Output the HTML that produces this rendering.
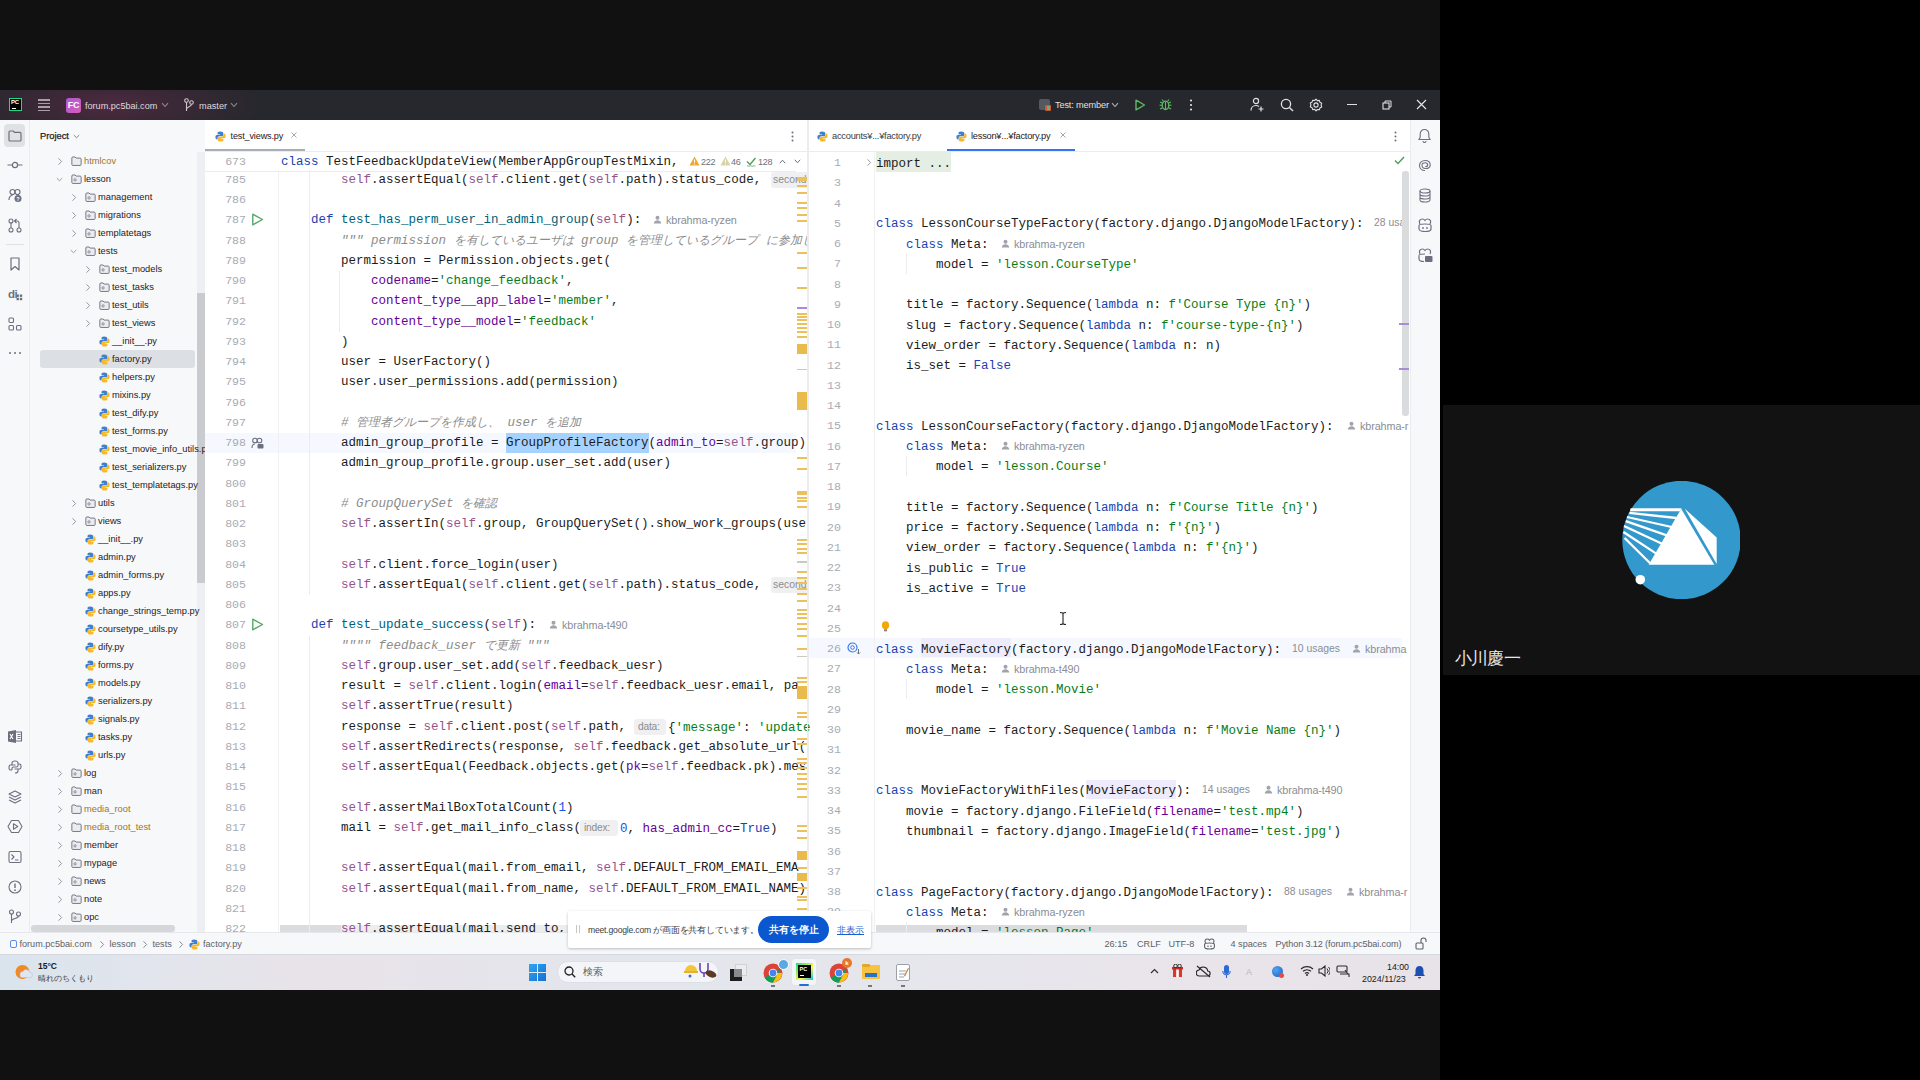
<!DOCTYPE html>
<html><head><meta charset="utf-8">
<style>
*{box-sizing:border-box;margin:0;padding:0}
html,body{width:1920px;height:1080px;overflow:hidden;background:#000}
body{position:relative;font-family:"Liberation Sans",sans-serif}
.a{position:absolute}
#share{left:0;top:0;width:1440px;height:1080px;background:#111}
#title{left:0;top:90px;width:1440px;height:30px;background:radial-gradient(ellipse 150px 40px at 110px 15px,#4d2a40 0%,#3a2836 45%,#27282d 100%);background-color:#27282d}
.tb{color:#dfe1e5;font-size:11px;white-space:nowrap}
#stripeL{left:0;top:120px;width:30px;height:812px;background:#f7f8fa;border-right:1px solid #ebecf0}
#proj{left:30px;top:120px;width:175px;height:812px;background:#f7f8fa}
#edL{left:205px;top:120px;width:603px;height:812px;background:#fff}
#edR{left:808px;top:120px;width:602px;height:812px;background:#fff;border-left:1px solid #ebecf0}
#stripeR{left:1410px;top:120px;width:30px;height:812px;background:#f7f8fa;border-left:1px solid #ebecf0}
#status{left:0;top:932px;width:1440px;height:22px;background:#f7f8fa;border-top:1px solid #e6e7ea}
#taskbar{left:0;top:954px;width:1440px;height:36px;background:linear-gradient(90deg,#dae4ed 0%,#e3e5ec 12%,#e8e3e9 22%,#e3e6ed 45%,#e6e6ec 65%,#e9e4ea 85%,#e7e3e9 100%);border-top:1px solid #d5d8de}
#tile{left:1443px;top:405px;width:477px;height:270px;background:#121212}
.tabbar{height:32px;border-bottom:1px solid #ebecf0;background:#fff}
.mono{font-family:"Liberation Mono",monospace;font-size:12.5px;white-space:pre;color:#1c1c1c}
.ln{color:#9fa3ab;text-align:right}
.ui{font-size:10.5px;color:#1f2024;white-space:nowrap}
.k{color:#1a43b0}.f{color:#00627a}.s{color:#067d17}.sf{color:#94558d}.p{color:#660099}.c{color:#8c8c8c;font-style:italic}.n{color:#1750eb}
.hint{font-family:"Liberation Sans",sans-serif;font-size:10.5px;color:#8c8c8c}
.inl{font-family:"Liberation Sans",sans-serif;font-size:10px;color:#8a8a8a;background:#ededf0;border-radius:3px;padding:1px 3px}
</style></head><body>

<div class="a" id="share"></div>
<div class="a" id="tile"></div>
<div class="a" id="title"></div>
<div class="a" id="stripeL"></div>
<div class="a" id="proj"></div>
<div class="a" id="edL"></div>
<div class="a" id="edR"></div>
<div class="a" id="stripeR"></div>
<div class="a" id="status"></div>
<div class="a" id="taskbar"></div>
<div class="a" style="left:205px;top:152px;width:602px;height:780px;overflow:hidden">
<div class="a" style="left:136px;top:773px;width:230px;height:8px;background:#ededee"></div>
<div class="a" style="left:75px;top:773px;width:61px;height:8px;background:#dcdcde"></div>
<div class="a" style="left:0;top:281.00px;width:591px;height:20.25px;background:#f5f8fe"></div>
<div class="a" style="left:301.00px;top:281.00px;width:142.50px;height:20.25px;background:#a6d2ff"></div>
<div class="a mono ln" style="left:0;top:17.75px;width:41px;line-height:20.25px;color:#a8abb3;font-size:11.6px">785</div>
<div class="a mono " style="left:76.00px;top:17.75px;height:20px;line-height:20px">        <span class="sf">self</span>.assertEqual(<span class="sf">self</span>.client.get(<span class="sf">self</span>.path).status_code, </div>
<div class="a mono ln" style="left:0;top:38.00px;width:41px;line-height:20.25px;color:#a8abb3;font-size:11.6px">786</div>
<div class="a mono " style="left:76.00px;top:38.00px;height:20px;line-height:20px"></div>
<div class="a mono ln" style="left:0;top:58.25px;width:41px;line-height:20.25px;color:#a8abb3;font-size:11.6px">787</div>
<div class="a mono " style="left:76.00px;top:58.25px;height:20px;line-height:20px">    <span class="k">def</span> <span class="f">test_has_perm_user_in_admin_group</span>(<span class="sf">self</span>):</div>
<div class="a mono ln" style="left:0;top:78.50px;width:41px;line-height:20.25px;color:#a8abb3;font-size:11.6px">788</div>
<div class="a mono " style="left:76.00px;top:78.50px;height:20px;line-height:20px">        <span class="c">&quot;&quot;&quot; permission <span style="font-size:11.9px">を有しているユーザは</span> group <span style="font-size:11.9px">を管理しているグループ</span> <span style="font-size:11.9px">に参加し</span></span></div>
<div class="a mono ln" style="left:0;top:98.75px;width:41px;line-height:20.25px;color:#a8abb3;font-size:11.6px">789</div>
<div class="a mono " style="left:76.00px;top:98.75px;height:20px;line-height:20px">        permission = Permission.objects.get(</div>
<div class="a mono ln" style="left:0;top:119.00px;width:41px;line-height:20.25px;color:#a8abb3;font-size:11.6px">790</div>
<div class="a mono " style="left:76.00px;top:119.00px;height:20px;line-height:20px">            <span class="p">codename</span>=<span class="s">&#x27;change_feedback&#x27;</span>,</div>
<div class="a mono ln" style="left:0;top:139.25px;width:41px;line-height:20.25px;color:#a8abb3;font-size:11.6px">791</div>
<div class="a mono " style="left:76.00px;top:139.25px;height:20px;line-height:20px">            <span class="p">content_type__app_label</span>=<span class="s">&#x27;member&#x27;</span>,</div>
<div class="a mono ln" style="left:0;top:159.50px;width:41px;line-height:20.25px;color:#a8abb3;font-size:11.6px">792</div>
<div class="a mono " style="left:76.00px;top:159.50px;height:20px;line-height:20px">            <span class="p">content_type__model</span>=<span class="s">&#x27;feedback&#x27;</span></div>
<div class="a mono ln" style="left:0;top:179.75px;width:41px;line-height:20.25px;color:#a8abb3;font-size:11.6px">793</div>
<div class="a mono " style="left:76.00px;top:179.75px;height:20px;line-height:20px">        )</div>
<div class="a mono ln" style="left:0;top:200.00px;width:41px;line-height:20.25px;color:#a8abb3;font-size:11.6px">794</div>
<div class="a mono " style="left:76.00px;top:200.00px;height:20px;line-height:20px">        user = UserFactory()</div>
<div class="a mono ln" style="left:0;top:220.25px;width:41px;line-height:20.25px;color:#a8abb3;font-size:11.6px">795</div>
<div class="a mono " style="left:76.00px;top:220.25px;height:20px;line-height:20px">        user.user_permissions.add(permission)</div>
<div class="a mono ln" style="left:0;top:240.50px;width:41px;line-height:20.25px;color:#a8abb3;font-size:11.6px">796</div>
<div class="a mono " style="left:76.00px;top:240.50px;height:20px;line-height:20px"></div>
<div class="a mono ln" style="left:0;top:260.75px;width:41px;line-height:20.25px;color:#a8abb3;font-size:11.6px">797</div>
<div class="a mono " style="left:76.00px;top:260.75px;height:20px;line-height:20px">        <span class="c"># <span style="font-size:11.9px">管理者グループを作成し、</span> user <span style="font-size:11.9px">を追加</span></span></div>
<div class="a mono ln" style="left:0;top:281.00px;width:41px;line-height:20.25px;color:#a8abb3;font-size:11.6px">798</div>
<div class="a mono " style="left:76.00px;top:281.00px;height:20px;line-height:20px">        admin_group_profile = GroupProfileFactory(<span class="p">admin_to</span>=<span class="sf">self</span>.group)</div>
<div class="a mono ln" style="left:0;top:301.25px;width:41px;line-height:20.25px;color:#a8abb3;font-size:11.6px">799</div>
<div class="a mono " style="left:76.00px;top:301.25px;height:20px;line-height:20px">        admin_group_profile.group.user_set.add(user)</div>
<div class="a mono ln" style="left:0;top:321.50px;width:41px;line-height:20.25px;color:#a8abb3;font-size:11.6px">800</div>
<div class="a mono " style="left:76.00px;top:321.50px;height:20px;line-height:20px"></div>
<div class="a mono ln" style="left:0;top:341.75px;width:41px;line-height:20.25px;color:#a8abb3;font-size:11.6px">801</div>
<div class="a mono " style="left:76.00px;top:341.75px;height:20px;line-height:20px">        <span class="c"># GroupQuerySet <span style="font-size:11.9px">を確認</span></span></div>
<div class="a mono ln" style="left:0;top:362.00px;width:41px;line-height:20.25px;color:#a8abb3;font-size:11.6px">802</div>
<div class="a mono " style="left:76.00px;top:362.00px;height:20px;line-height:20px">        <span class="sf">self</span>.assertIn(<span class="sf">self</span>.group, GroupQuerySet().show_work_groups(user</div>
<div class="a mono ln" style="left:0;top:382.25px;width:41px;line-height:20.25px;color:#a8abb3;font-size:11.6px">803</div>
<div class="a mono " style="left:76.00px;top:382.25px;height:20px;line-height:20px"></div>
<div class="a mono ln" style="left:0;top:402.50px;width:41px;line-height:20.25px;color:#a8abb3;font-size:11.6px">804</div>
<div class="a mono " style="left:76.00px;top:402.50px;height:20px;line-height:20px">        <span class="sf">self</span>.client.force_login(user)</div>
<div class="a mono ln" style="left:0;top:422.75px;width:41px;line-height:20.25px;color:#a8abb3;font-size:11.6px">805</div>
<div class="a mono " style="left:76.00px;top:422.75px;height:20px;line-height:20px">        <span class="sf">self</span>.assertEqual(<span class="sf">self</span>.client.get(<span class="sf">self</span>.path).status_code, </div>
<div class="a mono ln" style="left:0;top:443.00px;width:41px;line-height:20.25px;color:#a8abb3;font-size:11.6px">806</div>
<div class="a mono " style="left:76.00px;top:443.00px;height:20px;line-height:20px"></div>
<div class="a mono ln" style="left:0;top:463.25px;width:41px;line-height:20.25px;color:#a8abb3;font-size:11.6px">807</div>
<div class="a mono " style="left:76.00px;top:463.25px;height:20px;line-height:20px">    <span class="k">def</span> <span class="f">test_update_success</span>(<span class="sf">self</span>):</div>
<div class="a mono ln" style="left:0;top:483.50px;width:41px;line-height:20.25px;color:#a8abb3;font-size:11.6px">808</div>
<div class="a mono " style="left:76.00px;top:483.50px;height:20px;line-height:20px">        <span class="c">&quot;&quot;&quot;&quot; feedback_user <span style="font-size:11.9px">で更新</span> &quot;&quot;&quot;</span></div>
<div class="a mono ln" style="left:0;top:503.75px;width:41px;line-height:20.25px;color:#a8abb3;font-size:11.6px">809</div>
<div class="a mono " style="left:76.00px;top:503.75px;height:20px;line-height:20px">        <span class="sf">self</span>.group.user_set.add(<span class="sf">self</span>.feedback_uesr)</div>
<div class="a mono ln" style="left:0;top:524.00px;width:41px;line-height:20.25px;color:#a8abb3;font-size:11.6px">810</div>
<div class="a mono " style="left:76.00px;top:524.00px;height:20px;line-height:20px">        result = <span class="sf">self</span>.client.login(<span class="p">email</span>=<span class="sf">self</span>.feedback_uesr.email, pa</div>
<div class="a mono ln" style="left:0;top:544.25px;width:41px;line-height:20.25px;color:#a8abb3;font-size:11.6px">811</div>
<div class="a mono " style="left:76.00px;top:544.25px;height:20px;line-height:20px">        <span class="sf">self</span>.assertTrue(result)</div>
<div class="a mono ln" style="left:0;top:564.50px;width:41px;line-height:20.25px;color:#a8abb3;font-size:11.6px">812</div>
<div class="a mono " style="left:76.00px;top:564.50px;height:20px;line-height:20px">        response = <span class="sf">self</span>.client.post(<span class="sf">self</span>.path, </div>
<div class="a mono ln" style="left:0;top:584.75px;width:41px;line-height:20.25px;color:#a8abb3;font-size:11.6px">813</div>
<div class="a mono " style="left:76.00px;top:584.75px;height:20px;line-height:20px">        <span class="sf">self</span>.assertRedirects(response, <span class="sf">self</span>.feedback.get_absolute_url(</div>
<div class="a mono ln" style="left:0;top:605.00px;width:41px;line-height:20.25px;color:#a8abb3;font-size:11.6px">814</div>
<div class="a mono " style="left:76.00px;top:605.00px;height:20px;line-height:20px">        <span class="sf">self</span>.assertEqual(Feedback.objects.get(<span class="p">pk</span>=<span class="sf">self</span>.feedback.pk).mes</div>
<div class="a mono ln" style="left:0;top:625.25px;width:41px;line-height:20.25px;color:#a8abb3;font-size:11.6px">815</div>
<div class="a mono " style="left:76.00px;top:625.25px;height:20px;line-height:20px"></div>
<div class="a mono ln" style="left:0;top:645.50px;width:41px;line-height:20.25px;color:#a8abb3;font-size:11.6px">816</div>
<div class="a mono " style="left:76.00px;top:645.50px;height:20px;line-height:20px">        <span class="sf">self</span>.assertMailBoxTotalCount(<span class="n">1</span>)</div>
<div class="a mono ln" style="left:0;top:665.75px;width:41px;line-height:20.25px;color:#a8abb3;font-size:11.6px">817</div>
<div class="a mono " style="left:76.00px;top:665.75px;height:20px;line-height:20px">        mail = <span class="sf">self</span>.get_mail_info_class(</div>
<div class="a mono ln" style="left:0;top:686.00px;width:41px;line-height:20.25px;color:#a8abb3;font-size:11.6px">818</div>
<div class="a mono " style="left:76.00px;top:686.00px;height:20px;line-height:20px"></div>
<div class="a mono ln" style="left:0;top:706.25px;width:41px;line-height:20.25px;color:#a8abb3;font-size:11.6px">819</div>
<div class="a mono " style="left:76.00px;top:706.25px;height:20px;line-height:20px">        <span class="sf">self</span>.assertEqual(mail.from_email, <span class="sf">self</span>.DEFAULT_FROM_EMAIL_EMA</div>
<div class="a mono ln" style="left:0;top:726.50px;width:41px;line-height:20.25px;color:#a8abb3;font-size:11.6px">820</div>
<div class="a mono " style="left:76.00px;top:726.50px;height:20px;line-height:20px">        <span class="sf">self</span>.assertEqual(mail.from_name, <span class="sf">self</span>.DEFAULT_FROM_EMAIL_NAME)</div>
<div class="a mono ln" style="left:0;top:746.75px;width:41px;line-height:20.25px;color:#a8abb3;font-size:11.6px">821</div>
<div class="a mono " style="left:76.00px;top:746.75px;height:20px;line-height:20px"></div>
<div class="a mono ln" style="left:0;top:767.00px;width:41px;line-height:20.25px;color:#a8abb3;font-size:11.6px">822</div>
<div class="a mono " style="left:76.00px;top:767.00px;height:20px;line-height:20px">        <span class="sf">self</span>.assertEqual(mail.send_to, </div>
</div>
<div class="a" style="left:205px;top:152px;width:591px;height:20px;background:#fff;border-bottom:1px solid #ebecf0"></div>
<div class="a mono ln" style="left:205px;top:152px;width:41px;line-height:20px;color:#a8abb3;font-size:11.6px">673</div>
<div class="a mono " style="left:281.00px;top:152.00px;height:20px;line-height:20px"><span class="k">class</span> TestFeedbackUpdateView(MemberAppGroupTestMixin,</div>
<div class="a" style="left:809px;top:152px;width:593px;height:780px;overflow:hidden">
<div class="a" style="left:0;top:486.00px;width:593px;height:20.25px;background:#f5f8fe"></div>
<div class="a" style="left:67px;top:773px;width:371px;height:7px;background:#dcdcde"></div>
<div class="a" style="left:96.5px;top:101.25px;width:1px;height:20.25px;background:#ececef"></div>
<div class="a" style="left:96.5px;top:303.75px;width:1px;height:20.25px;background:#ececef"></div>
<div class="a" style="left:96.5px;top:526.50px;width:1px;height:20.25px;background:#ececef"></div>
<div class="a" style="left:96.5px;top:769.50px;width:1px;height:20.25px;background:#ececef"></div>
<div class="a" style="left:67.00px;top:0;width:75.00px;height:20px;background:#e4eee2"></div>
<div class="a" style="left:112.00px;top:486.00px;width:90.00px;height:19px;background:#edebfc"></div>
<div class="a" style="left:277.00px;top:627.75px;width:90.00px;height:19px;background:#edebfc"></div>
<div class="a mono ln" style="left:0;top:1.00px;width:32px;line-height:20.25px;color:#a8abb3;font-size:11.6px">1</div>
<div class="a mono " style="left:67.00px;top:1.50px;height:20px;line-height:20px">import ...</div>
<div class="a mono ln" style="left:0;top:21.25px;width:32px;line-height:20.25px;color:#a8abb3;font-size:11.6px">3</div>
<div class="a mono " style="left:67.00px;top:21.75px;height:20px;line-height:20px"></div>
<div class="a mono ln" style="left:0;top:41.50px;width:32px;line-height:20.25px;color:#a8abb3;font-size:11.6px">4</div>
<div class="a mono " style="left:67.00px;top:42.00px;height:20px;line-height:20px"></div>
<div class="a mono ln" style="left:0;top:61.75px;width:32px;line-height:20.25px;color:#a8abb3;font-size:11.6px">5</div>
<div class="a mono " style="left:67.00px;top:62.25px;height:20px;line-height:20px"><span class="k">class</span> LessonCourseTypeFactory(factory.django.DjangoModelFactory):</div>
<div class="a mono ln" style="left:0;top:82.00px;width:32px;line-height:20.25px;color:#a8abb3;font-size:11.6px">6</div>
<div class="a mono " style="left:67.00px;top:82.50px;height:20px;line-height:20px">    <span class="k">class</span> Meta:</div>
<div class="a mono ln" style="left:0;top:102.25px;width:32px;line-height:20.25px;color:#a8abb3;font-size:11.6px">7</div>
<div class="a mono " style="left:67.00px;top:102.75px;height:20px;line-height:20px">        model = <span class="s">&#x27;lesson.CourseType&#x27;</span></div>
<div class="a mono ln" style="left:0;top:122.50px;width:32px;line-height:20.25px;color:#a8abb3;font-size:11.6px">8</div>
<div class="a mono " style="left:67.00px;top:123.00px;height:20px;line-height:20px"></div>
<div class="a mono ln" style="left:0;top:142.75px;width:32px;line-height:20.25px;color:#a8abb3;font-size:11.6px">9</div>
<div class="a mono " style="left:67.00px;top:143.25px;height:20px;line-height:20px">    title = factory.Sequence(<span class="k">lambda</span> n: <span class="s">f&#x27;Course Type {n}&#x27;</span>)</div>
<div class="a mono ln" style="left:0;top:163.00px;width:32px;line-height:20.25px;color:#a8abb3;font-size:11.6px">10</div>
<div class="a mono " style="left:67.00px;top:163.50px;height:20px;line-height:20px">    slug = factory.Sequence(<span class="k">lambda</span> n: <span class="s">f&#x27;course-type-{n}&#x27;</span>)</div>
<div class="a mono ln" style="left:0;top:183.25px;width:32px;line-height:20.25px;color:#a8abb3;font-size:11.6px">11</div>
<div class="a mono " style="left:67.00px;top:183.75px;height:20px;line-height:20px">    view_order = factory.Sequence(<span class="k">lambda</span> n: n)</div>
<div class="a mono ln" style="left:0;top:203.50px;width:32px;line-height:20.25px;color:#a8abb3;font-size:11.6px">12</div>
<div class="a mono " style="left:67.00px;top:204.00px;height:20px;line-height:20px">    is_set = <span class="k">False</span></div>
<div class="a mono ln" style="left:0;top:223.75px;width:32px;line-height:20.25px;color:#a8abb3;font-size:11.6px">13</div>
<div class="a mono " style="left:67.00px;top:224.25px;height:20px;line-height:20px"></div>
<div class="a mono ln" style="left:0;top:244.00px;width:32px;line-height:20.25px;color:#a8abb3;font-size:11.6px">14</div>
<div class="a mono " style="left:67.00px;top:244.50px;height:20px;line-height:20px"></div>
<div class="a mono ln" style="left:0;top:264.25px;width:32px;line-height:20.25px;color:#a8abb3;font-size:11.6px">15</div>
<div class="a mono " style="left:67.00px;top:264.75px;height:20px;line-height:20px"><span class="k">class</span> LessonCourseFactory(factory.django.DjangoModelFactory):</div>
<div class="a mono ln" style="left:0;top:284.50px;width:32px;line-height:20.25px;color:#a8abb3;font-size:11.6px">16</div>
<div class="a mono " style="left:67.00px;top:285.00px;height:20px;line-height:20px">    <span class="k">class</span> Meta:</div>
<div class="a mono ln" style="left:0;top:304.75px;width:32px;line-height:20.25px;color:#a8abb3;font-size:11.6px">17</div>
<div class="a mono " style="left:67.00px;top:305.25px;height:20px;line-height:20px">        model = <span class="s">&#x27;lesson.Course&#x27;</span></div>
<div class="a mono ln" style="left:0;top:325.00px;width:32px;line-height:20.25px;color:#a8abb3;font-size:11.6px">18</div>
<div class="a mono " style="left:67.00px;top:325.50px;height:20px;line-height:20px"></div>
<div class="a mono ln" style="left:0;top:345.25px;width:32px;line-height:20.25px;color:#a8abb3;font-size:11.6px">19</div>
<div class="a mono " style="left:67.00px;top:345.75px;height:20px;line-height:20px">    title = factory.Sequence(<span class="k">lambda</span> n: <span class="s">f&#x27;Course Title {n}&#x27;</span>)</div>
<div class="a mono ln" style="left:0;top:365.50px;width:32px;line-height:20.25px;color:#a8abb3;font-size:11.6px">20</div>
<div class="a mono " style="left:67.00px;top:366.00px;height:20px;line-height:20px">    price = factory.Sequence(<span class="k">lambda</span> n: <span class="s">f&#x27;{n}&#x27;</span>)</div>
<div class="a mono ln" style="left:0;top:385.75px;width:32px;line-height:20.25px;color:#a8abb3;font-size:11.6px">21</div>
<div class="a mono " style="left:67.00px;top:386.25px;height:20px;line-height:20px">    view_order = factory.Sequence(<span class="k">lambda</span> n: <span class="s">f&#x27;{n}&#x27;</span>)</div>
<div class="a mono ln" style="left:0;top:406.00px;width:32px;line-height:20.25px;color:#a8abb3;font-size:11.6px">22</div>
<div class="a mono " style="left:67.00px;top:406.50px;height:20px;line-height:20px">    is_public = <span class="k">True</span></div>
<div class="a mono ln" style="left:0;top:426.25px;width:32px;line-height:20.25px;color:#a8abb3;font-size:11.6px">23</div>
<div class="a mono " style="left:67.00px;top:426.75px;height:20px;line-height:20px">    is_active = <span class="k">True</span></div>
<div class="a mono ln" style="left:0;top:446.50px;width:32px;line-height:20.25px;color:#a8abb3;font-size:11.6px">24</div>
<div class="a mono " style="left:67.00px;top:447.00px;height:20px;line-height:20px"></div>
<div class="a mono ln" style="left:0;top:466.75px;width:32px;line-height:20.25px;color:#a8abb3;font-size:11.6px">25</div>
<div class="a mono " style="left:67.00px;top:467.25px;height:20px;line-height:20px"></div>
<div class="a mono ln" style="left:0;top:487.00px;width:32px;line-height:20.25px;color:#a8abb3;font-size:11.6px">26</div>
<div class="a mono " style="left:67.00px;top:487.50px;height:20px;line-height:20px"><span class="k">class</span> MovieFactory(factory.django.DjangoModelFactory):</div>
<div class="a mono ln" style="left:0;top:507.25px;width:32px;line-height:20.25px;color:#a8abb3;font-size:11.6px">27</div>
<div class="a mono " style="left:67.00px;top:507.75px;height:20px;line-height:20px">    <span class="k">class</span> Meta:</div>
<div class="a mono ln" style="left:0;top:527.50px;width:32px;line-height:20.25px;color:#a8abb3;font-size:11.6px">28</div>
<div class="a mono " style="left:67.00px;top:528.00px;height:20px;line-height:20px">        model = <span class="s">&#x27;lesson.Movie&#x27;</span></div>
<div class="a mono ln" style="left:0;top:547.75px;width:32px;line-height:20.25px;color:#a8abb3;font-size:11.6px">29</div>
<div class="a mono " style="left:67.00px;top:548.25px;height:20px;line-height:20px"></div>
<div class="a mono ln" style="left:0;top:568.00px;width:32px;line-height:20.25px;color:#a8abb3;font-size:11.6px">30</div>
<div class="a mono " style="left:67.00px;top:568.50px;height:20px;line-height:20px">    movie_name = factory.Sequence(<span class="k">lambda</span> n: <span class="s">f&#x27;Movie Name {n}&#x27;</span>)</div>
<div class="a mono ln" style="left:0;top:588.25px;width:32px;line-height:20.25px;color:#a8abb3;font-size:11.6px">31</div>
<div class="a mono " style="left:67.00px;top:588.75px;height:20px;line-height:20px"></div>
<div class="a mono ln" style="left:0;top:608.50px;width:32px;line-height:20.25px;color:#a8abb3;font-size:11.6px">32</div>
<div class="a mono " style="left:67.00px;top:609.00px;height:20px;line-height:20px"></div>
<div class="a mono ln" style="left:0;top:628.75px;width:32px;line-height:20.25px;color:#a8abb3;font-size:11.6px">33</div>
<div class="a mono " style="left:67.00px;top:629.25px;height:20px;line-height:20px"><span class="k">class</span> MovieFactoryWithFiles(MovieFactory):</div>
<div class="a mono ln" style="left:0;top:649.00px;width:32px;line-height:20.25px;color:#a8abb3;font-size:11.6px">34</div>
<div class="a mono " style="left:67.00px;top:649.50px;height:20px;line-height:20px">    movie = factory.django.FileField(<span class="p">filename</span>=<span class="s">&#x27;test.mp4&#x27;</span>)</div>
<div class="a mono ln" style="left:0;top:669.25px;width:32px;line-height:20.25px;color:#a8abb3;font-size:11.6px">35</div>
<div class="a mono " style="left:67.00px;top:669.75px;height:20px;line-height:20px">    thumbnail = factory.django.ImageField(<span class="p">filename</span>=<span class="s">&#x27;test.jpg&#x27;</span>)</div>
<div class="a mono ln" style="left:0;top:689.50px;width:32px;line-height:20.25px;color:#a8abb3;font-size:11.6px">36</div>
<div class="a mono " style="left:67.00px;top:690.00px;height:20px;line-height:20px"></div>
<div class="a mono ln" style="left:0;top:709.75px;width:32px;line-height:20.25px;color:#a8abb3;font-size:11.6px">37</div>
<div class="a mono " style="left:67.00px;top:710.25px;height:20px;line-height:20px"></div>
<div class="a mono ln" style="left:0;top:730.00px;width:32px;line-height:20.25px;color:#a8abb3;font-size:11.6px">38</div>
<div class="a mono " style="left:67.00px;top:730.50px;height:20px;line-height:20px"><span class="k">class</span> PageFactory(factory.django.DjangoModelFactory):</div>
<div class="a mono ln" style="left:0;top:750.25px;width:32px;line-height:20.25px;color:#a8abb3;font-size:11.6px">39</div>
<div class="a mono " style="left:67.00px;top:750.75px;height:20px;line-height:20px">    <span class="k">class</span> Meta:</div>
<div class="a mono ln" style="left:0;top:770.50px;width:32px;line-height:20.25px;color:#a8abb3;font-size:11.6px">40</div>
<div class="a mono " style="left:67.00px;top:771.00px;height:20px;line-height:20px">        model = <span class="s">&#x27;lesson.Page&#x27;</span></div>
</div>
<div class="a" style="left:9px;top:98px;width:13px;height:13px;background:#000;border:1px solid #21d789"></div>
<div class="a" style="left:11px;top:99px;font:bold 6px/7px 'Liberation Sans',sans-serif;color:#fff;letter-spacing:-0.3px">PC</div>
<div class="a" style="left:11.5px;top:108px;width:4px;height:1px;background:#fff"></div>
<div class="a" style="left:38px;top:99.3px;width:12px;height:1.6px;background:#ab9ca8"></div>
<div class="a" style="left:38px;top:102.8px;width:12px;height:1.6px;background:#ab9ca8"></div>
<div class="a" style="left:38px;top:106.3px;width:12px;height:1.6px;background:#ab9ca8"></div>
<div class="a" style="left:38px;top:109.8px;width:12px;height:1.6px;background:#ab9ca8"></div>
<div class="a" style="left:66px;top:98px;width:15px;height:15px;border-radius:3px;background:linear-gradient(135deg,#b057d4,#d35fb8);color:#fff;font:bold 9px/15px 'Liberation Sans',sans-serif;text-align:center;letter-spacing:-0.2px">FC</div>
<div class="a" style="left:85px;top:95.5px;height:20px;line-height:20px;font-size:9.1px;color:#dfd9de;white-space:nowrap;">forum.pc5bai.com</div>
<svg class="a" style="left:161px;top:102px;" width="8" height="6" viewBox="0 0 8 6"><path d="M1 1.2 L4 4.5 L7 1.2" fill="none" stroke="#8d8790" stroke-width="1.1"/></svg>
<svg class="a" style="left:184px;top:98px;" width="10" height="14" viewBox="0 0 10 14"><circle cx="2.5" cy="2.5" r="1.8" fill="none" stroke="#cfc6cc" stroke-width="1.1"/><circle cx="7.5" cy="4.5" r="1.8" fill="none" stroke="#cfc6cc" stroke-width="1.1"/><path d="M2.5 4.3V13M7.5 6.3c0 2.5-5 2.5-5 5" fill="none" stroke="#cfc6cc" stroke-width="1.1"/></svg>
<div class="a" style="left:199px;top:95.5px;height:20px;line-height:20px;font-size:9.2px;color:#dfd9de;white-space:nowrap;">master</div>
<svg class="a" style="left:230px;top:102px;" width="8" height="6" viewBox="0 0 8 6"><path d="M1 1.2 L4 4.5 L7 1.2" fill="none" stroke="#8d8790" stroke-width="1.1"/></svg>
<div class="a" style="left:1039px;top:99px;width:11px;height:11px;border-radius:2px;background:#55585e"></div>
<div class="a" style="left:1045px;top:105px;width:6px;height:6px;border-radius:1px;background:#c85a3c"></div>
<div class="a" style="left:1047px;top:106px;width:3px;height:4px;background:#5fb865"></div>
<div class="a" style="left:1055px;top:95px;height:20px;line-height:20px;font-size:9.2px;color:#dfe1e5;white-space:nowrap;letter-spacing:-0.15px">Test: member</div>
<svg class="a" style="left:1111px;top:102px;" width="8" height="6" viewBox="0 0 8 6"><path d="M1 1.2 L4 4.5 L7 1.2" fill="none" stroke="#b0b3b8" stroke-width="1.1"/></svg>
<svg class="a" style="left:1134px;top:99px;" width="12" height="12" viewBox="0 0 12 12"><path d="M2 1.2 L10.5 6 L2 10.8z" fill="none" stroke="#5fb865" stroke-width="1.4" stroke-linejoin="round"/></svg>
<svg class="a" style="left:1159px;top:98px;" width="13" height="13" viewBox="0 0 13 13"><ellipse cx="6.5" cy="7.3" rx="3.3" ry="4.2" fill="none" stroke="#5fb865" stroke-width="1.3"/><path d="M4.5 3.5l-1.5-2M8.5 3.5l1.5-2M3 7.3H0.5M10 7.3h2.5M3.3 5L1 4M9.7 5L12 4M3.3 9.8L1 11M9.7 9.8L12 11M6.5 4v7" fill="none" stroke="#5fb865" stroke-width="1.1"/></svg>
<svg class="a" style="left:1189px;top:99px;" width="4" height="12" viewBox="0 0 4 12"><circle cx="2" cy="1.5" r="1.1" fill="#dfe1e5"/><circle cx="2" cy="6" r="1.1" fill="#dfe1e5"/><circle cx="2" cy="10.5" r="1.1" fill="#dfe1e5"/></svg>
<svg class="a" style="left:1250px;top:97px;" width="15" height="15" viewBox="0 0 15 15"><circle cx="6" cy="4" r="2.6" fill="none" stroke="#dfe1e5" stroke-width="1.2"/><path d="M1 13.5c0-3 2.2-5 5-5 1.2 0 2.2.3 3 .9" fill="none" stroke="#dfe1e5" stroke-width="1.2"/><path d="M11 9.5v5M8.5 12h5" stroke="#dfe1e5" stroke-width="1.2"/></svg>
<svg class="a" style="left:1280px;top:98px;" width="14" height="14" viewBox="0 0 14 14"><circle cx="6" cy="6" r="4.6" fill="none" stroke="#dfe1e5" stroke-width="1.3"/><path d="M9.4 9.4L13 13" stroke="#dfe1e5" stroke-width="1.4"/></svg>
<svg class="a" style="left:1309px;top:98px;" width="14" height="14" viewBox="0 0 14 14"><path d="M7 1.2l1.3 1.5 2-.3.6 1.9 1.8.9-.6 1.9.6 1.9-1.8.9-.6 1.9-2-.3L7 12.8l-1.3-1.5-2 .3-.6-1.9-1.8-.9.6-1.9-.6-1.9 1.8-.9.6-1.9 2 .3z" fill="none" stroke="#dfe1e5" stroke-width="1.1" stroke-linejoin="round"/><circle cx="7" cy="7" r="2.1" fill="none" stroke="#dfe1e5" stroke-width="1.1"/></svg>
<div class="a" style="left:1347px;top:104px;width:10px;height:1.2px;background:#dfe1e5"></div>
<svg class="a" style="left:1382px;top:100px;" width="10" height="10" viewBox="0 0 10 10"><rect x="1" y="3" width="6" height="6" fill="none" stroke="#dfe1e5" stroke-width="1.1"/><path d="M3 3V1h6v6H7" fill="none" stroke="#dfe1e5" stroke-width="1"/></svg>
<svg class="a" style="left:1416px;top:99px;" width="11" height="11" viewBox="0 0 11 11"><path d="M1 1L10 10M10 1L1 10" stroke="#e8e9eb" stroke-width="1.1"/></svg>
<div class="a" style="left:4px;top:124px;width:21px;height:23px;border-radius:4px;background:#dfe1e5"></div>
<svg class="a" style="left:8px;top:130px;" width="14" height="12" viewBox="0 0 14 12"><path d="M1 2c0-.6.4-1 1-1h3.2l1.3 1.4H12c.6 0 1 .4 1 1V10c0 .6-.4 1-1 1H2c-.6 0-1-.4-1-1z" fill="none" stroke="#6c707e" stroke-width="1.2"/></svg>
<svg class="a" style="left:7px;top:160px;" width="16" height="10" viewBox="0 0 16 10"><circle cx="8" cy="5" r="2.6" fill="none" stroke="#6c707e" stroke-width="1.2"/><path d="M0.5 5h4.9M10.6 5h4.9" stroke="#6c707e" stroke-width="1.2"/></svg>
<svg class="a" style="left:8px;top:188px;" width="14" height="15" viewBox="0 0 14 15"><circle cx="4.5" cy="4" r="2.5" fill="none" stroke="#6c707e" stroke-width="1.2"/><circle cx="9.5" cy="4" r="2.5" fill="none" stroke="#6c707e" stroke-width="1.2"/><path d="M1 12c0-3 1.5-4.5 3.5-4.5" fill="none" stroke="#6c707e" stroke-width="1.2"/><circle cx="10" cy="10.5" r="3.5" fill="#6c707e"/><text x="10" y="12.6" font-size="5.5" font-family="Liberation Sans" font-weight="bold" fill="#fff" text-anchor="middle">?</text></svg>
<svg class="a" style="left:8px;top:218px;" width="14" height="15" viewBox="0 0 14 15"><circle cx="3" cy="3" r="2" fill="none" stroke="#6c707e" stroke-width="1.1"/><circle cx="3" cy="12" r="2" fill="none" stroke="#6c707e" stroke-width="1.1"/><circle cx="11" cy="12" r="2" fill="none" stroke="#6c707e" stroke-width="1.1"/><path d="M3 5v5M11 10V5c0-1-.5-2-2-2H7M8.5 1L6.5 3l2 2" fill="none" stroke="#6c707e" stroke-width="1.1"/></svg>
<div class="a" style="left:6px;top:244px;width:18px;height:1px;background:#dfe1e5"></div>
<svg class="a" style="left:10px;top:257px;" width="10" height="14" viewBox="0 0 10 14"><path d="M1 1h8v12L5 9.5 1 13z" fill="none" stroke="#6c707e" stroke-width="1.2" stroke-linejoin="round"/></svg>
<div class="a" style="left:8px;top:284px;height:20px;line-height:20px;font-size:11.5px;color:#6c707e;white-space:nowrap;font-weight:bold;letter-spacing:-0.6px">di</div>
<svg class="a" style="left:16px;top:294px;" width="7" height="7" viewBox="0 0 7 7"><rect x="0.5" y="0.5" width="2.4" height="2.4" fill="#6c707e"/><rect x="3.8" y="0.5" width="2.4" height="2.4" fill="#6c707e"/><rect x="0.5" y="3.8" width="2.4" height="2.4" fill="#6c707e"/><rect x="3.8" y="3.8" width="2.4" height="2.4" fill="#6c707e"/></svg>
<svg class="a" style="left:8px;top:317px;" width="14" height="14" viewBox="0 0 14 14"><rect x="1" y="1" width="4.5" height="4.5" rx="1" fill="none" stroke="#6c707e" stroke-width="1.1"/><rect x="1" y="8.5" width="4.5" height="4.5" rx="1" fill="none" stroke="#6c707e" stroke-width="1.1"/><rect x="8.5" y="8.5" width="4.5" height="4.5" rx="1" fill="none" stroke="#6c707e" stroke-width="1.1"/></svg>
<svg class="a" style="left:8px;top:351px;" width="14" height="4" viewBox="0 0 14 4"><circle cx="2" cy="2" r="1" fill="#6c707e"/><circle cx="7" cy="2" r="1" fill="#6c707e"/><circle cx="12" cy="2" r="1" fill="#6c707e"/></svg>
<svg class="a" style="left:7px;top:729px;" width="16" height="15" viewBox="0 0 16 15"><path d="M1 2.5L9 1v13L1 12.5z" fill="#6c707e"/><path d="M9 3h5.5v9H9" fill="none" stroke="#6c707e" stroke-width="1.1"/><path d="M10.5 5.5h3M10.5 7.5h3M10.5 9.5h3" stroke="#6c707e" stroke-width=".9"/><path d="M3 5l3 5M6 5l-3 5" stroke="#fff" stroke-width="1.1"/></svg>
<svg class="a" style="left:8px;top:760px;" width="14" height="14" viewBox="0 0 14 14"><path d="M7 1c-2.5 0-3 1-3 2v2h3.5M4 5H2.5C1.5 5 1 6 1 7.5S1.5 10 2.5 10H4M7 13c2.5 0 3-1 3-2V9H6.5M10 9h1.5c1 0 1.5-1 1.5-2.5S12.5 4 11.5 4H10V3c0-1-1-2-3-2M4 10V8.5C4 7.5 4.5 7 5.5 7h3C9.5 7 10 6.5 10 5.5V4" fill="none" stroke="#6c707e" stroke-width="1.1"/></svg>
<svg class="a" style="left:8px;top:790px;" width="14" height="14" viewBox="0 0 14 14"><path d="M7 1l6 3-6 3-6-3z" fill="none" stroke="#6c707e" stroke-width="1.1" stroke-linejoin="round"/><path d="M1 7l6 3 6-3M1 10l6 3 6-3" fill="none" stroke="#6c707e" stroke-width="1.1" stroke-linejoin="round"/></svg>
<svg class="a" style="left:7px;top:819px;" width="16" height="15" viewBox="0 0 16 15"><path d="M4.5 1.5h7L15 7.5l-3.5 6h-7L1 7.5z" fill="none" stroke="#6c707e" stroke-width="1.1" stroke-linejoin="round"/><path d="M6.5 4.8v5.4l4.3-2.7z" fill="none" stroke="#6c707e" stroke-width="1.1" stroke-linejoin="round"/></svg>
<svg class="a" style="left:8px;top:850px;" width="14" height="14" viewBox="0 0 14 14"><rect x="1" y="1.5" width="12" height="11" rx="1.5" fill="none" stroke="#6c707e" stroke-width="1.1"/><path d="M3.5 4.5L6 7 3.5 9.5M7 10h3.5" fill="none" stroke="#6c707e" stroke-width="1.1"/></svg>
<svg class="a" style="left:8px;top:880px;" width="14" height="14" viewBox="0 0 14 14"><circle cx="7" cy="7" r="6" fill="none" stroke="#6c707e" stroke-width="1.1"/><path d="M7 3.5v4.5" stroke="#6c707e" stroke-width="1.4"/><circle cx="7" cy="10.2" r=".9" fill="#6c707e"/></svg>
<svg class="a" style="left:8px;top:909px;" width="14" height="15" viewBox="0 0 14 15"><circle cx="3.5" cy="3" r="2" fill="none" stroke="#6c707e" stroke-width="1.1"/><circle cx="10.5" cy="5" r="2" fill="none" stroke="#6c707e" stroke-width="1.1"/><path d="M3.5 5v9M10.5 7c0 3-7 2-7 5" fill="none" stroke="#6c707e" stroke-width="1.1"/></svg>
<div class="a" style="left:40px;top:126px;height:20px;line-height:20px;font-size:9.3px;color:#1f2024;white-space:nowrap;-webkit-text-stroke:0.25px #1f2024">Project</div>
<svg class="a" style="left:73px;top:134px;" width="7" height="5" viewBox="0 0 9 6"><path d="M1 1.2 L4.5 4.6 L8 1.2" fill="none" stroke="#6c707e" stroke-width="1.1"/></svg>
<div class="a" style="left:197px;top:152px;width:8px;height:780px;background:#eeeff2"></div>
<div class="a" style="left:197px;top:292.5px;width:8px;height:290px;background:#cacbce"></div>
<div class="a" style="left:30px;top:152px;width:175px;height:780px;overflow:hidden">
<svg class="a" style="left:26.5px;top:4.5px;" width="6" height="9" viewBox="0 0 6 9"><path d="M1.5 1.3 L4.6 4.5 L1.5 7.7" fill="none" stroke="#8a8d95" stroke-width="0.9"/></svg>
<svg class="a" style="left:40.5px;top:4.2px;" width="11" height="10" viewBox="0 0 13 11.5"><path d="M1 2.2c0-.7.5-1.2 1.2-1.2h2.6l1.2 1.3h4.8c.7 0 1.2.5 1.2 1.2v6.3c0 .7-.5 1.2-1.2 1.2H2.2c-.7 0-1.2-.5-1.2-1.2z" fill="#ebecf0" stroke="#6c707e" stroke-width="1.1"/></svg>
<div class="a" style="left:54px;top:-1px;height:20px;line-height:20px;font-size:9.3px;color:#a0742f;white-space:nowrap;">htmlcov</div>
<svg class="a" style="left:26px;top:24.5px;" width="7" height="5" viewBox="0 0 9 6"><path d="M1 1.2 L4.5 4.6 L8 1.2" fill="none" stroke="#8a8d95" stroke-width="1.1"/></svg>
<svg class="a" style="left:40.5px;top:22.2px;" width="11" height="10" viewBox="0 0 13 11.5"><path d="M1 2.2c0-.7.5-1.2 1.2-1.2h2.6l1.2 1.3h4.8c.7 0 1.2.5 1.2 1.2v6.3c0 .7-.5 1.2-1.2 1.2H2.2c-.7 0-1.2-.5-1.2-1.2z" fill="#ebecf0" stroke="#6c707e" stroke-width="1.1"/><rect x="3.6" y="5.6" width="2.4" height="2.4" rx=".6" fill="none" stroke="#6c707e" stroke-width=".9"/></svg>
<div class="a" style="left:54px;top:17px;height:20px;line-height:20px;font-size:9.3px;color:#1f2024;white-space:nowrap;">lesson</div>
<svg class="a" style="left:40.5px;top:40.5px;" width="6" height="9" viewBox="0 0 6 9"><path d="M1.5 1.3 L4.6 4.5 L1.5 7.7" fill="none" stroke="#8a8d95" stroke-width="0.9"/></svg>
<svg class="a" style="left:54.5px;top:40.2px;" width="11" height="10" viewBox="0 0 13 11.5"><path d="M1 2.2c0-.7.5-1.2 1.2-1.2h2.6l1.2 1.3h4.8c.7 0 1.2.5 1.2 1.2v6.3c0 .7-.5 1.2-1.2 1.2H2.2c-.7 0-1.2-.5-1.2-1.2z" fill="#ebecf0" stroke="#6c707e" stroke-width="1.1"/><rect x="3.6" y="5.6" width="2.4" height="2.4" rx=".6" fill="none" stroke="#6c707e" stroke-width=".9"/></svg>
<div class="a" style="left:68px;top:35px;height:20px;line-height:20px;font-size:9.3px;color:#1f2024;white-space:nowrap;">management</div>
<svg class="a" style="left:40.5px;top:58.5px;" width="6" height="9" viewBox="0 0 6 9"><path d="M1.5 1.3 L4.6 4.5 L1.5 7.7" fill="none" stroke="#8a8d95" stroke-width="0.9"/></svg>
<svg class="a" style="left:54.5px;top:58.2px;" width="11" height="10" viewBox="0 0 13 11.5"><path d="M1 2.2c0-.7.5-1.2 1.2-1.2h2.6l1.2 1.3h4.8c.7 0 1.2.5 1.2 1.2v6.3c0 .7-.5 1.2-1.2 1.2H2.2c-.7 0-1.2-.5-1.2-1.2z" fill="#ebecf0" stroke="#6c707e" stroke-width="1.1"/><rect x="3.6" y="5.6" width="2.4" height="2.4" rx=".6" fill="none" stroke="#6c707e" stroke-width=".9"/></svg>
<div class="a" style="left:68px;top:53px;height:20px;line-height:20px;font-size:9.3px;color:#1f2024;white-space:nowrap;">migrations</div>
<svg class="a" style="left:40.5px;top:76.5px;" width="6" height="9" viewBox="0 0 6 9"><path d="M1.5 1.3 L4.6 4.5 L1.5 7.7" fill="none" stroke="#8a8d95" stroke-width="0.9"/></svg>
<svg class="a" style="left:54.5px;top:76.2px;" width="11" height="10" viewBox="0 0 13 11.5"><path d="M1 2.2c0-.7.5-1.2 1.2-1.2h2.6l1.2 1.3h4.8c.7 0 1.2.5 1.2 1.2v6.3c0 .7-.5 1.2-1.2 1.2H2.2c-.7 0-1.2-.5-1.2-1.2z" fill="#ebecf0" stroke="#6c707e" stroke-width="1.1"/><rect x="3.6" y="5.6" width="2.4" height="2.4" rx=".6" fill="none" stroke="#6c707e" stroke-width=".9"/></svg>
<div class="a" style="left:68px;top:71px;height:20px;line-height:20px;font-size:9.3px;color:#1f2024;white-space:nowrap;">templatetags</div>
<svg class="a" style="left:40px;top:96.5px;" width="7" height="5" viewBox="0 0 9 6"><path d="M1 1.2 L4.5 4.6 L8 1.2" fill="none" stroke="#8a8d95" stroke-width="1.1"/></svg>
<svg class="a" style="left:54.5px;top:94.2px;" width="11" height="10" viewBox="0 0 13 11.5"><path d="M1 2.2c0-.7.5-1.2 1.2-1.2h2.6l1.2 1.3h4.8c.7 0 1.2.5 1.2 1.2v6.3c0 .7-.5 1.2-1.2 1.2H2.2c-.7 0-1.2-.5-1.2-1.2z" fill="#ebecf0" stroke="#6c707e" stroke-width="1.1"/><rect x="3.6" y="5.6" width="2.4" height="2.4" rx=".6" fill="none" stroke="#6c707e" stroke-width=".9"/></svg>
<div class="a" style="left:68px;top:89px;height:20px;line-height:20px;font-size:9.3px;color:#1f2024;white-space:nowrap;">tests</div>
<svg class="a" style="left:54.5px;top:112.5px;" width="6" height="9" viewBox="0 0 6 9"><path d="M1.5 1.3 L4.6 4.5 L1.5 7.7" fill="none" stroke="#8a8d95" stroke-width="0.9"/></svg>
<svg class="a" style="left:68.5px;top:112.2px;" width="11" height="10" viewBox="0 0 13 11.5"><path d="M1 2.2c0-.7.5-1.2 1.2-1.2h2.6l1.2 1.3h4.8c.7 0 1.2.5 1.2 1.2v6.3c0 .7-.5 1.2-1.2 1.2H2.2c-.7 0-1.2-.5-1.2-1.2z" fill="#ebecf0" stroke="#6c707e" stroke-width="1.1"/><rect x="3.6" y="5.6" width="2.4" height="2.4" rx=".6" fill="none" stroke="#6c707e" stroke-width=".9"/></svg>
<div class="a" style="left:82px;top:107px;height:20px;line-height:20px;font-size:9.3px;color:#1f2024;white-space:nowrap;">test_models</div>
<svg class="a" style="left:54.5px;top:130.5px;" width="6" height="9" viewBox="0 0 6 9"><path d="M1.5 1.3 L4.6 4.5 L1.5 7.7" fill="none" stroke="#8a8d95" stroke-width="0.9"/></svg>
<svg class="a" style="left:68.5px;top:130.2px;" width="11" height="10" viewBox="0 0 13 11.5"><path d="M1 2.2c0-.7.5-1.2 1.2-1.2h2.6l1.2 1.3h4.8c.7 0 1.2.5 1.2 1.2v6.3c0 .7-.5 1.2-1.2 1.2H2.2c-.7 0-1.2-.5-1.2-1.2z" fill="#ebecf0" stroke="#6c707e" stroke-width="1.1"/><rect x="3.6" y="5.6" width="2.4" height="2.4" rx=".6" fill="none" stroke="#6c707e" stroke-width=".9"/></svg>
<div class="a" style="left:82px;top:125px;height:20px;line-height:20px;font-size:9.3px;color:#1f2024;white-space:nowrap;">test_tasks</div>
<svg class="a" style="left:54.5px;top:148.5px;" width="6" height="9" viewBox="0 0 6 9"><path d="M1.5 1.3 L4.6 4.5 L1.5 7.7" fill="none" stroke="#8a8d95" stroke-width="0.9"/></svg>
<svg class="a" style="left:68.5px;top:148.2px;" width="11" height="10" viewBox="0 0 13 11.5"><path d="M1 2.2c0-.7.5-1.2 1.2-1.2h2.6l1.2 1.3h4.8c.7 0 1.2.5 1.2 1.2v6.3c0 .7-.5 1.2-1.2 1.2H2.2c-.7 0-1.2-.5-1.2-1.2z" fill="#ebecf0" stroke="#6c707e" stroke-width="1.1"/><rect x="3.6" y="5.6" width="2.4" height="2.4" rx=".6" fill="none" stroke="#6c707e" stroke-width=".9"/></svg>
<div class="a" style="left:82px;top:143px;height:20px;line-height:20px;font-size:9.3px;color:#1f2024;white-space:nowrap;">test_utils</div>
<svg class="a" style="left:54.5px;top:166.5px;" width="6" height="9" viewBox="0 0 6 9"><path d="M1.5 1.3 L4.6 4.5 L1.5 7.7" fill="none" stroke="#8a8d95" stroke-width="0.9"/></svg>
<svg class="a" style="left:68.5px;top:166.2px;" width="11" height="10" viewBox="0 0 13 11.5"><path d="M1 2.2c0-.7.5-1.2 1.2-1.2h2.6l1.2 1.3h4.8c.7 0 1.2.5 1.2 1.2v6.3c0 .7-.5 1.2-1.2 1.2H2.2c-.7 0-1.2-.5-1.2-1.2z" fill="#ebecf0" stroke="#6c707e" stroke-width="1.1"/><rect x="3.6" y="5.6" width="2.4" height="2.4" rx=".6" fill="none" stroke="#6c707e" stroke-width=".9"/></svg>
<div class="a" style="left:82px;top:161px;height:20px;line-height:20px;font-size:9.3px;color:#1f2024;white-space:nowrap;">test_views</div>
<svg class="a" style="left:69px;top:183.5px;" width="11" height="11" viewBox="0 0 12 13"><path d="M5.5 0.5c-2.5 0-3 1-3 2v1.5h3v0.6H1.6C0.6 4.6 0 5.6 0 7.2s0.6 2.7 1.6 2.7h1V8.3c0-1.1 0.9-2 2-2h3c0.9 0 1.6-0.7 1.6-1.6V2.5c0-1-1-2-3.7-2z" fill="#3f7fd0"/><path d="M6.5 12.5c2.5 0 3-1 3-2V9h-3v-0.6h3.9c1 0 1.6-1 1.6-2.6s-0.6-2.7-1.6-2.7h-1v1.6c0 1.1-0.9 2-2 2h-3c-0.9 0-1.6 0.7-1.6 1.6v2.2c0 1 1 2 3.7 2z" fill="#f6b92a"/></svg>
<div class="a" style="left:82px;top:179px;height:20px;line-height:20px;font-size:9.3px;color:#1f2024;white-space:nowrap;">__init__.py</div>
<div class="a" style="left:10px;top:198px;width:155px;height:18px;border-radius:3px;background:#dcdfe4"></div>
<svg class="a" style="left:69px;top:201.5px;" width="11" height="11" viewBox="0 0 12 13"><path d="M5.5 0.5c-2.5 0-3 1-3 2v1.5h3v0.6H1.6C0.6 4.6 0 5.6 0 7.2s0.6 2.7 1.6 2.7h1V8.3c0-1.1 0.9-2 2-2h3c0.9 0 1.6-0.7 1.6-1.6V2.5c0-1-1-2-3.7-2z" fill="#3f7fd0"/><path d="M6.5 12.5c2.5 0 3-1 3-2V9h-3v-0.6h3.9c1 0 1.6-1 1.6-2.6s-0.6-2.7-1.6-2.7h-1v1.6c0 1.1-0.9 2-2 2h-3c-0.9 0-1.6 0.7-1.6 1.6v2.2c0 1 1 2 3.7 2z" fill="#f6b92a"/></svg>
<div class="a" style="left:82px;top:197px;height:20px;line-height:20px;font-size:9.3px;color:#1f2024;white-space:nowrap;">factory.py</div>
<svg class="a" style="left:69px;top:219.5px;" width="11" height="11" viewBox="0 0 12 13"><path d="M5.5 0.5c-2.5 0-3 1-3 2v1.5h3v0.6H1.6C0.6 4.6 0 5.6 0 7.2s0.6 2.7 1.6 2.7h1V8.3c0-1.1 0.9-2 2-2h3c0.9 0 1.6-0.7 1.6-1.6V2.5c0-1-1-2-3.7-2z" fill="#3f7fd0"/><path d="M6.5 12.5c2.5 0 3-1 3-2V9h-3v-0.6h3.9c1 0 1.6-1 1.6-2.6s-0.6-2.7-1.6-2.7h-1v1.6c0 1.1-0.9 2-2 2h-3c-0.9 0-1.6 0.7-1.6 1.6v2.2c0 1 1 2 3.7 2z" fill="#f6b92a"/></svg>
<div class="a" style="left:82px;top:215px;height:20px;line-height:20px;font-size:9.3px;color:#1f2024;white-space:nowrap;">helpers.py</div>
<svg class="a" style="left:69px;top:237.5px;" width="11" height="11" viewBox="0 0 12 13"><path d="M5.5 0.5c-2.5 0-3 1-3 2v1.5h3v0.6H1.6C0.6 4.6 0 5.6 0 7.2s0.6 2.7 1.6 2.7h1V8.3c0-1.1 0.9-2 2-2h3c0.9 0 1.6-0.7 1.6-1.6V2.5c0-1-1-2-3.7-2z" fill="#3f7fd0"/><path d="M6.5 12.5c2.5 0 3-1 3-2V9h-3v-0.6h3.9c1 0 1.6-1 1.6-2.6s-0.6-2.7-1.6-2.7h-1v1.6c0 1.1-0.9 2-2 2h-3c-0.9 0-1.6 0.7-1.6 1.6v2.2c0 1 1 2 3.7 2z" fill="#f6b92a"/></svg>
<div class="a" style="left:82px;top:233px;height:20px;line-height:20px;font-size:9.3px;color:#1f2024;white-space:nowrap;">mixins.py</div>
<svg class="a" style="left:69px;top:255.5px;" width="11" height="11" viewBox="0 0 12 13"><path d="M5.5 0.5c-2.5 0-3 1-3 2v1.5h3v0.6H1.6C0.6 4.6 0 5.6 0 7.2s0.6 2.7 1.6 2.7h1V8.3c0-1.1 0.9-2 2-2h3c0.9 0 1.6-0.7 1.6-1.6V2.5c0-1-1-2-3.7-2z" fill="#3f7fd0"/><path d="M6.5 12.5c2.5 0 3-1 3-2V9h-3v-0.6h3.9c1 0 1.6-1 1.6-2.6s-0.6-2.7-1.6-2.7h-1v1.6c0 1.1-0.9 2-2 2h-3c-0.9 0-1.6 0.7-1.6 1.6v2.2c0 1 1 2 3.7 2z" fill="#f6b92a"/></svg>
<div class="a" style="left:82px;top:251px;height:20px;line-height:20px;font-size:9.3px;color:#1f2024;white-space:nowrap;">test_dify.py</div>
<svg class="a" style="left:69px;top:273.5px;" width="11" height="11" viewBox="0 0 12 13"><path d="M5.5 0.5c-2.5 0-3 1-3 2v1.5h3v0.6H1.6C0.6 4.6 0 5.6 0 7.2s0.6 2.7 1.6 2.7h1V8.3c0-1.1 0.9-2 2-2h3c0.9 0 1.6-0.7 1.6-1.6V2.5c0-1-1-2-3.7-2z" fill="#3f7fd0"/><path d="M6.5 12.5c2.5 0 3-1 3-2V9h-3v-0.6h3.9c1 0 1.6-1 1.6-2.6s-0.6-2.7-1.6-2.7h-1v1.6c0 1.1-0.9 2-2 2h-3c-0.9 0-1.6 0.7-1.6 1.6v2.2c0 1 1 2 3.7 2z" fill="#f6b92a"/></svg>
<div class="a" style="left:82px;top:269px;height:20px;line-height:20px;font-size:9.3px;color:#1f2024;white-space:nowrap;">test_forms.py</div>
<svg class="a" style="left:69px;top:291.5px;" width="11" height="11" viewBox="0 0 12 13"><path d="M5.5 0.5c-2.5 0-3 1-3 2v1.5h3v0.6H1.6C0.6 4.6 0 5.6 0 7.2s0.6 2.7 1.6 2.7h1V8.3c0-1.1 0.9-2 2-2h3c0.9 0 1.6-0.7 1.6-1.6V2.5c0-1-1-2-3.7-2z" fill="#3f7fd0"/><path d="M6.5 12.5c2.5 0 3-1 3-2V9h-3v-0.6h3.9c1 0 1.6-1 1.6-2.6s-0.6-2.7-1.6-2.7h-1v1.6c0 1.1-0.9 2-2 2h-3c-0.9 0-1.6 0.7-1.6 1.6v2.2c0 1 1 2 3.7 2z" fill="#f6b92a"/></svg>
<div class="a" style="left:82px;top:287px;height:20px;line-height:20px;font-size:9.3px;color:#1f2024;white-space:nowrap;">test_movie_info_utils.py</div>
<svg class="a" style="left:69px;top:309.5px;" width="11" height="11" viewBox="0 0 12 13"><path d="M5.5 0.5c-2.5 0-3 1-3 2v1.5h3v0.6H1.6C0.6 4.6 0 5.6 0 7.2s0.6 2.7 1.6 2.7h1V8.3c0-1.1 0.9-2 2-2h3c0.9 0 1.6-0.7 1.6-1.6V2.5c0-1-1-2-3.7-2z" fill="#3f7fd0"/><path d="M6.5 12.5c2.5 0 3-1 3-2V9h-3v-0.6h3.9c1 0 1.6-1 1.6-2.6s-0.6-2.7-1.6-2.7h-1v1.6c0 1.1-0.9 2-2 2h-3c-0.9 0-1.6 0.7-1.6 1.6v2.2c0 1 1 2 3.7 2z" fill="#f6b92a"/></svg>
<div class="a" style="left:82px;top:305px;height:20px;line-height:20px;font-size:9.3px;color:#1f2024;white-space:nowrap;">test_serializers.py</div>
<svg class="a" style="left:69px;top:327.5px;" width="11" height="11" viewBox="0 0 12 13"><path d="M5.5 0.5c-2.5 0-3 1-3 2v1.5h3v0.6H1.6C0.6 4.6 0 5.6 0 7.2s0.6 2.7 1.6 2.7h1V8.3c0-1.1 0.9-2 2-2h3c0.9 0 1.6-0.7 1.6-1.6V2.5c0-1-1-2-3.7-2z" fill="#3f7fd0"/><path d="M6.5 12.5c2.5 0 3-1 3-2V9h-3v-0.6h3.9c1 0 1.6-1 1.6-2.6s-0.6-2.7-1.6-2.7h-1v1.6c0 1.1-0.9 2-2 2h-3c-0.9 0-1.6 0.7-1.6 1.6v2.2c0 1 1 2 3.7 2z" fill="#f6b92a"/></svg>
<div class="a" style="left:82px;top:323px;height:20px;line-height:20px;font-size:9.3px;color:#1f2024;white-space:nowrap;">test_templatetags.py</div>
<svg class="a" style="left:40.5px;top:346.5px;" width="6" height="9" viewBox="0 0 6 9"><path d="M1.5 1.3 L4.6 4.5 L1.5 7.7" fill="none" stroke="#8a8d95" stroke-width="0.9"/></svg>
<svg class="a" style="left:54.5px;top:346.2px;" width="11" height="10" viewBox="0 0 13 11.5"><path d="M1 2.2c0-.7.5-1.2 1.2-1.2h2.6l1.2 1.3h4.8c.7 0 1.2.5 1.2 1.2v6.3c0 .7-.5 1.2-1.2 1.2H2.2c-.7 0-1.2-.5-1.2-1.2z" fill="#ebecf0" stroke="#6c707e" stroke-width="1.1"/><rect x="3.6" y="5.6" width="2.4" height="2.4" rx=".6" fill="none" stroke="#6c707e" stroke-width=".9"/></svg>
<div class="a" style="left:68px;top:341px;height:20px;line-height:20px;font-size:9.3px;color:#1f2024;white-space:nowrap;">utils</div>
<svg class="a" style="left:40.5px;top:364.5px;" width="6" height="9" viewBox="0 0 6 9"><path d="M1.5 1.3 L4.6 4.5 L1.5 7.7" fill="none" stroke="#8a8d95" stroke-width="0.9"/></svg>
<svg class="a" style="left:54.5px;top:364.2px;" width="11" height="10" viewBox="0 0 13 11.5"><path d="M1 2.2c0-.7.5-1.2 1.2-1.2h2.6l1.2 1.3h4.8c.7 0 1.2.5 1.2 1.2v6.3c0 .7-.5 1.2-1.2 1.2H2.2c-.7 0-1.2-.5-1.2-1.2z" fill="#ebecf0" stroke="#6c707e" stroke-width="1.1"/><rect x="3.6" y="5.6" width="2.4" height="2.4" rx=".6" fill="none" stroke="#6c707e" stroke-width=".9"/></svg>
<div class="a" style="left:68px;top:359px;height:20px;line-height:20px;font-size:9.3px;color:#1f2024;white-space:nowrap;">views</div>
<svg class="a" style="left:55px;top:381.5px;" width="11" height="11" viewBox="0 0 12 13"><path d="M5.5 0.5c-2.5 0-3 1-3 2v1.5h3v0.6H1.6C0.6 4.6 0 5.6 0 7.2s0.6 2.7 1.6 2.7h1V8.3c0-1.1 0.9-2 2-2h3c0.9 0 1.6-0.7 1.6-1.6V2.5c0-1-1-2-3.7-2z" fill="#3f7fd0"/><path d="M6.5 12.5c2.5 0 3-1 3-2V9h-3v-0.6h3.9c1 0 1.6-1 1.6-2.6s-0.6-2.7-1.6-2.7h-1v1.6c0 1.1-0.9 2-2 2h-3c-0.9 0-1.6 0.7-1.6 1.6v2.2c0 1 1 2 3.7 2z" fill="#f6b92a"/></svg>
<div class="a" style="left:68px;top:377px;height:20px;line-height:20px;font-size:9.3px;color:#1f2024;white-space:nowrap;">__init__.py</div>
<svg class="a" style="left:55px;top:399.5px;" width="11" height="11" viewBox="0 0 12 13"><path d="M5.5 0.5c-2.5 0-3 1-3 2v1.5h3v0.6H1.6C0.6 4.6 0 5.6 0 7.2s0.6 2.7 1.6 2.7h1V8.3c0-1.1 0.9-2 2-2h3c0.9 0 1.6-0.7 1.6-1.6V2.5c0-1-1-2-3.7-2z" fill="#3f7fd0"/><path d="M6.5 12.5c2.5 0 3-1 3-2V9h-3v-0.6h3.9c1 0 1.6-1 1.6-2.6s-0.6-2.7-1.6-2.7h-1v1.6c0 1.1-0.9 2-2 2h-3c-0.9 0-1.6 0.7-1.6 1.6v2.2c0 1 1 2 3.7 2z" fill="#f6b92a"/></svg>
<div class="a" style="left:68px;top:395px;height:20px;line-height:20px;font-size:9.3px;color:#1f2024;white-space:nowrap;">admin.py</div>
<svg class="a" style="left:55px;top:417.5px;" width="11" height="11" viewBox="0 0 12 13"><path d="M5.5 0.5c-2.5 0-3 1-3 2v1.5h3v0.6H1.6C0.6 4.6 0 5.6 0 7.2s0.6 2.7 1.6 2.7h1V8.3c0-1.1 0.9-2 2-2h3c0.9 0 1.6-0.7 1.6-1.6V2.5c0-1-1-2-3.7-2z" fill="#3f7fd0"/><path d="M6.5 12.5c2.5 0 3-1 3-2V9h-3v-0.6h3.9c1 0 1.6-1 1.6-2.6s-0.6-2.7-1.6-2.7h-1v1.6c0 1.1-0.9 2-2 2h-3c-0.9 0-1.6 0.7-1.6 1.6v2.2c0 1 1 2 3.7 2z" fill="#f6b92a"/></svg>
<div class="a" style="left:68px;top:413px;height:20px;line-height:20px;font-size:9.3px;color:#1f2024;white-space:nowrap;">admin_forms.py</div>
<svg class="a" style="left:55px;top:435.5px;" width="11" height="11" viewBox="0 0 12 13"><path d="M5.5 0.5c-2.5 0-3 1-3 2v1.5h3v0.6H1.6C0.6 4.6 0 5.6 0 7.2s0.6 2.7 1.6 2.7h1V8.3c0-1.1 0.9-2 2-2h3c0.9 0 1.6-0.7 1.6-1.6V2.5c0-1-1-2-3.7-2z" fill="#3f7fd0"/><path d="M6.5 12.5c2.5 0 3-1 3-2V9h-3v-0.6h3.9c1 0 1.6-1 1.6-2.6s-0.6-2.7-1.6-2.7h-1v1.6c0 1.1-0.9 2-2 2h-3c-0.9 0-1.6 0.7-1.6 1.6v2.2c0 1 1 2 3.7 2z" fill="#f6b92a"/></svg>
<div class="a" style="left:68px;top:431px;height:20px;line-height:20px;font-size:9.3px;color:#1f2024;white-space:nowrap;">apps.py</div>
<svg class="a" style="left:55px;top:453.5px;" width="11" height="11" viewBox="0 0 12 13"><path d="M5.5 0.5c-2.5 0-3 1-3 2v1.5h3v0.6H1.6C0.6 4.6 0 5.6 0 7.2s0.6 2.7 1.6 2.7h1V8.3c0-1.1 0.9-2 2-2h3c0.9 0 1.6-0.7 1.6-1.6V2.5c0-1-1-2-3.7-2z" fill="#3f7fd0"/><path d="M6.5 12.5c2.5 0 3-1 3-2V9h-3v-0.6h3.9c1 0 1.6-1 1.6-2.6s-0.6-2.7-1.6-2.7h-1v1.6c0 1.1-0.9 2-2 2h-3c-0.9 0-1.6 0.7-1.6 1.6v2.2c0 1 1 2 3.7 2z" fill="#f6b92a"/></svg>
<div class="a" style="left:68px;top:449px;height:20px;line-height:20px;font-size:9.3px;color:#1f2024;white-space:nowrap;">change_strings_temp.py</div>
<svg class="a" style="left:55px;top:471.5px;" width="11" height="11" viewBox="0 0 12 13"><path d="M5.5 0.5c-2.5 0-3 1-3 2v1.5h3v0.6H1.6C0.6 4.6 0 5.6 0 7.2s0.6 2.7 1.6 2.7h1V8.3c0-1.1 0.9-2 2-2h3c0.9 0 1.6-0.7 1.6-1.6V2.5c0-1-1-2-3.7-2z" fill="#3f7fd0"/><path d="M6.5 12.5c2.5 0 3-1 3-2V9h-3v-0.6h3.9c1 0 1.6-1 1.6-2.6s-0.6-2.7-1.6-2.7h-1v1.6c0 1.1-0.9 2-2 2h-3c-0.9 0-1.6 0.7-1.6 1.6v2.2c0 1 1 2 3.7 2z" fill="#f6b92a"/></svg>
<div class="a" style="left:68px;top:467px;height:20px;line-height:20px;font-size:9.3px;color:#1f2024;white-space:nowrap;">coursetype_utils.py</div>
<svg class="a" style="left:55px;top:489.5px;" width="11" height="11" viewBox="0 0 12 13"><path d="M5.5 0.5c-2.5 0-3 1-3 2v1.5h3v0.6H1.6C0.6 4.6 0 5.6 0 7.2s0.6 2.7 1.6 2.7h1V8.3c0-1.1 0.9-2 2-2h3c0.9 0 1.6-0.7 1.6-1.6V2.5c0-1-1-2-3.7-2z" fill="#3f7fd0"/><path d="M6.5 12.5c2.5 0 3-1 3-2V9h-3v-0.6h3.9c1 0 1.6-1 1.6-2.6s-0.6-2.7-1.6-2.7h-1v1.6c0 1.1-0.9 2-2 2h-3c-0.9 0-1.6 0.7-1.6 1.6v2.2c0 1 1 2 3.7 2z" fill="#f6b92a"/></svg>
<div class="a" style="left:68px;top:485px;height:20px;line-height:20px;font-size:9.3px;color:#1f2024;white-space:nowrap;">dify.py</div>
<svg class="a" style="left:55px;top:507.5px;" width="11" height="11" viewBox="0 0 12 13"><path d="M5.5 0.5c-2.5 0-3 1-3 2v1.5h3v0.6H1.6C0.6 4.6 0 5.6 0 7.2s0.6 2.7 1.6 2.7h1V8.3c0-1.1 0.9-2 2-2h3c0.9 0 1.6-0.7 1.6-1.6V2.5c0-1-1-2-3.7-2z" fill="#3f7fd0"/><path d="M6.5 12.5c2.5 0 3-1 3-2V9h-3v-0.6h3.9c1 0 1.6-1 1.6-2.6s-0.6-2.7-1.6-2.7h-1v1.6c0 1.1-0.9 2-2 2h-3c-0.9 0-1.6 0.7-1.6 1.6v2.2c0 1 1 2 3.7 2z" fill="#f6b92a"/></svg>
<div class="a" style="left:68px;top:503px;height:20px;line-height:20px;font-size:9.3px;color:#1f2024;white-space:nowrap;">forms.py</div>
<svg class="a" style="left:55px;top:525.5px;" width="11" height="11" viewBox="0 0 12 13"><path d="M5.5 0.5c-2.5 0-3 1-3 2v1.5h3v0.6H1.6C0.6 4.6 0 5.6 0 7.2s0.6 2.7 1.6 2.7h1V8.3c0-1.1 0.9-2 2-2h3c0.9 0 1.6-0.7 1.6-1.6V2.5c0-1-1-2-3.7-2z" fill="#3f7fd0"/><path d="M6.5 12.5c2.5 0 3-1 3-2V9h-3v-0.6h3.9c1 0 1.6-1 1.6-2.6s-0.6-2.7-1.6-2.7h-1v1.6c0 1.1-0.9 2-2 2h-3c-0.9 0-1.6 0.7-1.6 1.6v2.2c0 1 1 2 3.7 2z" fill="#f6b92a"/></svg>
<div class="a" style="left:68px;top:521px;height:20px;line-height:20px;font-size:9.3px;color:#1f2024;white-space:nowrap;">models.py</div>
<svg class="a" style="left:55px;top:543.5px;" width="11" height="11" viewBox="0 0 12 13"><path d="M5.5 0.5c-2.5 0-3 1-3 2v1.5h3v0.6H1.6C0.6 4.6 0 5.6 0 7.2s0.6 2.7 1.6 2.7h1V8.3c0-1.1 0.9-2 2-2h3c0.9 0 1.6-0.7 1.6-1.6V2.5c0-1-1-2-3.7-2z" fill="#3f7fd0"/><path d="M6.5 12.5c2.5 0 3-1 3-2V9h-3v-0.6h3.9c1 0 1.6-1 1.6-2.6s-0.6-2.7-1.6-2.7h-1v1.6c0 1.1-0.9 2-2 2h-3c-0.9 0-1.6 0.7-1.6 1.6v2.2c0 1 1 2 3.7 2z" fill="#f6b92a"/></svg>
<div class="a" style="left:68px;top:539px;height:20px;line-height:20px;font-size:9.3px;color:#1f2024;white-space:nowrap;">serializers.py</div>
<svg class="a" style="left:55px;top:561.5px;" width="11" height="11" viewBox="0 0 12 13"><path d="M5.5 0.5c-2.5 0-3 1-3 2v1.5h3v0.6H1.6C0.6 4.6 0 5.6 0 7.2s0.6 2.7 1.6 2.7h1V8.3c0-1.1 0.9-2 2-2h3c0.9 0 1.6-0.7 1.6-1.6V2.5c0-1-1-2-3.7-2z" fill="#3f7fd0"/><path d="M6.5 12.5c2.5 0 3-1 3-2V9h-3v-0.6h3.9c1 0 1.6-1 1.6-2.6s-0.6-2.7-1.6-2.7h-1v1.6c0 1.1-0.9 2-2 2h-3c-0.9 0-1.6 0.7-1.6 1.6v2.2c0 1 1 2 3.7 2z" fill="#f6b92a"/></svg>
<div class="a" style="left:68px;top:557px;height:20px;line-height:20px;font-size:9.3px;color:#1f2024;white-space:nowrap;">signals.py</div>
<svg class="a" style="left:55px;top:579.5px;" width="11" height="11" viewBox="0 0 12 13"><path d="M5.5 0.5c-2.5 0-3 1-3 2v1.5h3v0.6H1.6C0.6 4.6 0 5.6 0 7.2s0.6 2.7 1.6 2.7h1V8.3c0-1.1 0.9-2 2-2h3c0.9 0 1.6-0.7 1.6-1.6V2.5c0-1-1-2-3.7-2z" fill="#3f7fd0"/><path d="M6.5 12.5c2.5 0 3-1 3-2V9h-3v-0.6h3.9c1 0 1.6-1 1.6-2.6s-0.6-2.7-1.6-2.7h-1v1.6c0 1.1-0.9 2-2 2h-3c-0.9 0-1.6 0.7-1.6 1.6v2.2c0 1 1 2 3.7 2z" fill="#f6b92a"/></svg>
<div class="a" style="left:68px;top:575px;height:20px;line-height:20px;font-size:9.3px;color:#1f2024;white-space:nowrap;">tasks.py</div>
<svg class="a" style="left:55px;top:597.5px;" width="11" height="11" viewBox="0 0 12 13"><path d="M5.5 0.5c-2.5 0-3 1-3 2v1.5h3v0.6H1.6C0.6 4.6 0 5.6 0 7.2s0.6 2.7 1.6 2.7h1V8.3c0-1.1 0.9-2 2-2h3c0.9 0 1.6-0.7 1.6-1.6V2.5c0-1-1-2-3.7-2z" fill="#3f7fd0"/><path d="M6.5 12.5c2.5 0 3-1 3-2V9h-3v-0.6h3.9c1 0 1.6-1 1.6-2.6s-0.6-2.7-1.6-2.7h-1v1.6c0 1.1-0.9 2-2 2h-3c-0.9 0-1.6 0.7-1.6 1.6v2.2c0 1 1 2 3.7 2z" fill="#f6b92a"/></svg>
<div class="a" style="left:68px;top:593px;height:20px;line-height:20px;font-size:9.3px;color:#1f2024;white-space:nowrap;">urls.py</div>
<svg class="a" style="left:26.5px;top:616.5px;" width="6" height="9" viewBox="0 0 6 9"><path d="M1.5 1.3 L4.6 4.5 L1.5 7.7" fill="none" stroke="#8a8d95" stroke-width="0.9"/></svg>
<svg class="a" style="left:40.5px;top:616.2px;" width="11" height="10" viewBox="0 0 13 11.5"><path d="M1 2.2c0-.7.5-1.2 1.2-1.2h2.6l1.2 1.3h4.8c.7 0 1.2.5 1.2 1.2v6.3c0 .7-.5 1.2-1.2 1.2H2.2c-.7 0-1.2-.5-1.2-1.2z" fill="#ebecf0" stroke="#6c707e" stroke-width="1.1"/><rect x="3.6" y="5.6" width="2.4" height="2.4" rx=".6" fill="none" stroke="#6c707e" stroke-width=".9"/></svg>
<div class="a" style="left:54px;top:611px;height:20px;line-height:20px;font-size:9.3px;color:#1f2024;white-space:nowrap;">log</div>
<svg class="a" style="left:26.5px;top:634.5px;" width="6" height="9" viewBox="0 0 6 9"><path d="M1.5 1.3 L4.6 4.5 L1.5 7.7" fill="none" stroke="#8a8d95" stroke-width="0.9"/></svg>
<svg class="a" style="left:40.5px;top:634.2px;" width="11" height="10" viewBox="0 0 13 11.5"><path d="M1 2.2c0-.7.5-1.2 1.2-1.2h2.6l1.2 1.3h4.8c.7 0 1.2.5 1.2 1.2v6.3c0 .7-.5 1.2-1.2 1.2H2.2c-.7 0-1.2-.5-1.2-1.2z" fill="#ebecf0" stroke="#6c707e" stroke-width="1.1"/><rect x="3.6" y="5.6" width="2.4" height="2.4" rx=".6" fill="none" stroke="#6c707e" stroke-width=".9"/></svg>
<div class="a" style="left:54px;top:629px;height:20px;line-height:20px;font-size:9.3px;color:#1f2024;white-space:nowrap;">man</div>
<svg class="a" style="left:26.5px;top:652.5px;" width="6" height="9" viewBox="0 0 6 9"><path d="M1.5 1.3 L4.6 4.5 L1.5 7.7" fill="none" stroke="#8a8d95" stroke-width="0.9"/></svg>
<svg class="a" style="left:40.5px;top:652.2px;" width="11" height="10" viewBox="0 0 13 11.5"><path d="M1 2.2c0-.7.5-1.2 1.2-1.2h2.6l1.2 1.3h4.8c.7 0 1.2.5 1.2 1.2v6.3c0 .7-.5 1.2-1.2 1.2H2.2c-.7 0-1.2-.5-1.2-1.2z" fill="#ebecf0" stroke="#6c707e" stroke-width="1.1"/></svg>
<div class="a" style="left:54px;top:647px;height:20px;line-height:20px;font-size:9.3px;color:#a0742f;white-space:nowrap;">media_root</div>
<svg class="a" style="left:26.5px;top:670.5px;" width="6" height="9" viewBox="0 0 6 9"><path d="M1.5 1.3 L4.6 4.5 L1.5 7.7" fill="none" stroke="#8a8d95" stroke-width="0.9"/></svg>
<svg class="a" style="left:40.5px;top:670.2px;" width="11" height="10" viewBox="0 0 13 11.5"><path d="M1 2.2c0-.7.5-1.2 1.2-1.2h2.6l1.2 1.3h4.8c.7 0 1.2.5 1.2 1.2v6.3c0 .7-.5 1.2-1.2 1.2H2.2c-.7 0-1.2-.5-1.2-1.2z" fill="#ebecf0" stroke="#6c707e" stroke-width="1.1"/></svg>
<div class="a" style="left:54px;top:665px;height:20px;line-height:20px;font-size:9.3px;color:#a0742f;white-space:nowrap;">media_root_test</div>
<svg class="a" style="left:26.5px;top:688.5px;" width="6" height="9" viewBox="0 0 6 9"><path d="M1.5 1.3 L4.6 4.5 L1.5 7.7" fill="none" stroke="#8a8d95" stroke-width="0.9"/></svg>
<svg class="a" style="left:40.5px;top:688.2px;" width="11" height="10" viewBox="0 0 13 11.5"><path d="M1 2.2c0-.7.5-1.2 1.2-1.2h2.6l1.2 1.3h4.8c.7 0 1.2.5 1.2 1.2v6.3c0 .7-.5 1.2-1.2 1.2H2.2c-.7 0-1.2-.5-1.2-1.2z" fill="#ebecf0" stroke="#6c707e" stroke-width="1.1"/><rect x="3.6" y="5.6" width="2.4" height="2.4" rx=".6" fill="none" stroke="#6c707e" stroke-width=".9"/></svg>
<div class="a" style="left:54px;top:683px;height:20px;line-height:20px;font-size:9.3px;color:#1f2024;white-space:nowrap;">member</div>
<svg class="a" style="left:26.5px;top:706.5px;" width="6" height="9" viewBox="0 0 6 9"><path d="M1.5 1.3 L4.6 4.5 L1.5 7.7" fill="none" stroke="#8a8d95" stroke-width="0.9"/></svg>
<svg class="a" style="left:40.5px;top:706.2px;" width="11" height="10" viewBox="0 0 13 11.5"><path d="M1 2.2c0-.7.5-1.2 1.2-1.2h2.6l1.2 1.3h4.8c.7 0 1.2.5 1.2 1.2v6.3c0 .7-.5 1.2-1.2 1.2H2.2c-.7 0-1.2-.5-1.2-1.2z" fill="#ebecf0" stroke="#6c707e" stroke-width="1.1"/><rect x="3.6" y="5.6" width="2.4" height="2.4" rx=".6" fill="none" stroke="#6c707e" stroke-width=".9"/></svg>
<div class="a" style="left:54px;top:701px;height:20px;line-height:20px;font-size:9.3px;color:#1f2024;white-space:nowrap;">mypage</div>
<svg class="a" style="left:26.5px;top:724.5px;" width="6" height="9" viewBox="0 0 6 9"><path d="M1.5 1.3 L4.6 4.5 L1.5 7.7" fill="none" stroke="#8a8d95" stroke-width="0.9"/></svg>
<svg class="a" style="left:40.5px;top:724.2px;" width="11" height="10" viewBox="0 0 13 11.5"><path d="M1 2.2c0-.7.5-1.2 1.2-1.2h2.6l1.2 1.3h4.8c.7 0 1.2.5 1.2 1.2v6.3c0 .7-.5 1.2-1.2 1.2H2.2c-.7 0-1.2-.5-1.2-1.2z" fill="#ebecf0" stroke="#6c707e" stroke-width="1.1"/><rect x="3.6" y="5.6" width="2.4" height="2.4" rx=".6" fill="none" stroke="#6c707e" stroke-width=".9"/></svg>
<div class="a" style="left:54px;top:719px;height:20px;line-height:20px;font-size:9.3px;color:#1f2024;white-space:nowrap;">news</div>
<svg class="a" style="left:26.5px;top:742.5px;" width="6" height="9" viewBox="0 0 6 9"><path d="M1.5 1.3 L4.6 4.5 L1.5 7.7" fill="none" stroke="#8a8d95" stroke-width="0.9"/></svg>
<svg class="a" style="left:40.5px;top:742.2px;" width="11" height="10" viewBox="0 0 13 11.5"><path d="M1 2.2c0-.7.5-1.2 1.2-1.2h2.6l1.2 1.3h4.8c.7 0 1.2.5 1.2 1.2v6.3c0 .7-.5 1.2-1.2 1.2H2.2c-.7 0-1.2-.5-1.2-1.2z" fill="#ebecf0" stroke="#6c707e" stroke-width="1.1"/><rect x="3.6" y="5.6" width="2.4" height="2.4" rx=".6" fill="none" stroke="#6c707e" stroke-width=".9"/></svg>
<div class="a" style="left:54px;top:737px;height:20px;line-height:20px;font-size:9.3px;color:#1f2024;white-space:nowrap;">note</div>
<svg class="a" style="left:26.5px;top:760.5px;" width="6" height="9" viewBox="0 0 6 9"><path d="M1.5 1.3 L4.6 4.5 L1.5 7.7" fill="none" stroke="#8a8d95" stroke-width="0.9"/></svg>
<svg class="a" style="left:40.5px;top:760.2px;" width="11" height="10" viewBox="0 0 13 11.5"><path d="M1 2.2c0-.7.5-1.2 1.2-1.2h2.6l1.2 1.3h4.8c.7 0 1.2.5 1.2 1.2v6.3c0 .7-.5 1.2-1.2 1.2H2.2c-.7 0-1.2-.5-1.2-1.2z" fill="#ebecf0" stroke="#6c707e" stroke-width="1.1"/><rect x="3.6" y="5.6" width="2.4" height="2.4" rx=".6" fill="none" stroke="#6c707e" stroke-width=".9"/></svg>
<div class="a" style="left:54px;top:755px;height:20px;line-height:20px;font-size:9.3px;color:#1f2024;white-space:nowrap;">opc</div>
<svg class="a" style="left:26.5px;top:778.5px;" width="6" height="9" viewBox="0 0 6 9"><path d="M1.5 1.3 L4.6 4.5 L1.5 7.7" fill="none" stroke="#8a8d95" stroke-width="0.9"/></svg>
<svg class="a" style="left:40.5px;top:778.2px;" width="11" height="10" viewBox="0 0 13 11.5"><path d="M1 2.2c0-.7.5-1.2 1.2-1.2h2.6l1.2 1.3h4.8c.7 0 1.2.5 1.2 1.2v6.3c0 .7-.5 1.2-1.2 1.2H2.2c-.7 0-1.2-.5-1.2-1.2z" fill="#ebecf0" stroke="#6c707e" stroke-width="1.1"/><rect x="3.6" y="5.6" width="2.4" height="2.4" rx=".6" fill="none" stroke="#6c707e" stroke-width=".9"/></svg>
<div class="a" style="left:54px;top:773px;height:20px;line-height:20px;font-size:9.3px;color:#1f2024;white-space:nowrap;"></div>
</div>
<svg class="a" style="left:215px;top:130.5px;" width="11" height="11" viewBox="0 0 12 13"><path d="M5.5 0.5c-2.5 0-3 1-3 2v1.5h3v0.6H1.6C0.6 4.6 0 5.6 0 7.2s0.6 2.7 1.6 2.7h1V8.3c0-1.1 0.9-2 2-2h3c0.9 0 1.6-0.7 1.6-1.6V2.5c0-1-1-2-3.7-2z" fill="#3f7fd0"/><path d="M6.5 12.5c2.5 0 3-1 3-2V9h-3v-0.6h3.9c1 0 1.6-1 1.6-2.6s-0.6-2.7-1.6-2.7h-1v1.6c0 1.1-0.9 2-2 2h-3c-0.9 0-1.6 0.7-1.6 1.6v2.2c0 1 1 2 3.7 2z" fill="#f6b92a"/></svg>
<div class="a" style="left:230.5px;top:126px;height:20px;line-height:20px;font-size:9.1px;color:#1f2024;white-space:nowrap;letter-spacing:-0.15px">test_views.py</div>
<svg class="a" style="left:291px;top:132px;" width="6" height="6" viewBox="0 0 6 6"><path d="M.5 .5l5 5M5.5 .5l-5 5" stroke="#9a9da5" stroke-width="0.9"/></svg>
<div class="a" style="left:205px;top:148.5px;width:100px;height:2.5px;background:#a9adb8"></div>
<svg class="a" style="left:791px;top:131px;" width="3" height="11" viewBox="0 0 3 11"><circle cx="1.5" cy="1.5" r="1" fill="#6c707e"/><circle cx="1.5" cy="5.5" r="1" fill="#6c707e"/><circle cx="1.5" cy="9.5" r="1" fill="#6c707e"/></svg>
<div class="a" style="left:205px;top:151px;width:603px;height:1px;background:#ebecf0"></div>
<svg class="a" style="left:817px;top:130.5px;" width="11" height="11" viewBox="0 0 12 13"><path d="M5.5 0.5c-2.5 0-3 1-3 2v1.5h3v0.6H1.6C0.6 4.6 0 5.6 0 7.2s0.6 2.7 1.6 2.7h1V8.3c0-1.1 0.9-2 2-2h3c0.9 0 1.6-0.7 1.6-1.6V2.5c0-1-1-2-3.7-2z" fill="#3f7fd0"/><path d="M6.5 12.5c2.5 0 3-1 3-2V9h-3v-0.6h3.9c1 0 1.6-1 1.6-2.6s-0.6-2.7-1.6-2.7h-1v1.6c0 1.1-0.9 2-2 2h-3c-0.9 0-1.6 0.7-1.6 1.6v2.2c0 1 1 2 3.7 2z" fill="#f6b92a"/></svg>
<div class="a" style="left:832px;top:126px;height:20px;line-height:20px;font-size:9.3px;color:#3b3d42;white-space:nowrap;letter-spacing:-0.25px">accounts¥...¥factory.py</div>
<svg class="a" style="left:956px;top:130.5px;" width="11" height="11" viewBox="0 0 12 13"><path d="M5.5 0.5c-2.5 0-3 1-3 2v1.5h3v0.6H1.6C0.6 4.6 0 5.6 0 7.2s0.6 2.7 1.6 2.7h1V8.3c0-1.1 0.9-2 2-2h3c0.9 0 1.6-0.7 1.6-1.6V2.5c0-1-1-2-3.7-2z" fill="#3f7fd0"/><path d="M6.5 12.5c2.5 0 3-1 3-2V9h-3v-0.6h3.9c1 0 1.6-1 1.6-2.6s-0.6-2.7-1.6-2.7h-1v1.6c0 1.1-0.9 2-2 2h-3c-0.9 0-1.6 0.7-1.6 1.6v2.2c0 1 1 2 3.7 2z" fill="#f6b92a"/></svg>
<div class="a" style="left:971px;top:126px;height:20px;line-height:20px;font-size:9.3px;color:#1f2024;white-space:nowrap;letter-spacing:-0.25px">lesson¥...¥factory.py</div>
<svg class="a" style="left:1060px;top:132px;" width="6" height="6" viewBox="0 0 6 6"><path d="M.5 .5l5 5M5.5 .5l-5 5" stroke="#9a9da5" stroke-width="0.9"/></svg>
<div class="a" style="left:947px;top:148.5px;width:128px;height:2.5px;background:#3574f0"></div>
<svg class="a" style="left:1394px;top:131px;" width="3" height="11" viewBox="0 0 3 11"><circle cx="1.5" cy="1.5" r="1" fill="#6c707e"/><circle cx="1.5" cy="5.5" r="1" fill="#6c707e"/><circle cx="1.5" cy="9.5" r="1" fill="#6c707e"/></svg>
<div class="a" style="left:808px;top:151px;width:602px;height:1px;background:#ebecf0"></div>
<div class="a" style="left:278px;top:172px;width:1px;height:760px;background:#f0f0f2"></div>
<div class="a" style="left:308.5px;top:169.75px;width:1px;height:425.25px;background:#ececef"></div>
<div class="a" style="left:308.5px;top:635.5px;width:1px;height:296.5px;background:#ececef"></div>
<div class="a" style="left:338.5px;top:271px;width:1px;height:60.75px;background:#ececef"></div>
<svg class="a" style="left:250.5px;top:212.75px;" width="13" height="13" viewBox="0 0 13 13"><path d="M1.8 1.2 L11.5 6.5 L1.8 11.8z" fill="none" stroke="#55a76a" stroke-width="1.4" stroke-linejoin="round"/></svg>
<svg class="a" style="left:250.5px;top:617.75px;" width="13" height="13" viewBox="0 0 13 13"><path d="M1.8 1.2 L11.5 6.5 L1.8 11.8z" fill="none" stroke="#55a76a" stroke-width="1.4" stroke-linejoin="round"/></svg>
<svg class="a" style="left:251px;top:437px;" width="13" height="12" viewBox="0 0 13 12"><circle cx="4" cy="3.5" r="2.3" fill="none" stroke="#6c707e" stroke-width="1.1"/><circle cx="8.5" cy="3.5" r="2.3" fill="none" stroke="#6c707e" stroke-width="1.1"/><path d="M1 11c0-2.5 1.3-4 3-4" fill="none" stroke="#6c707e" stroke-width="1.1"/><rect x="6.5" y="7" width="6" height="4.5" rx="1" fill="#6c707e"/></svg>
<svg class="a" style="left:689px;top:156px;" width="11" height="10" viewBox="0 0 11 10"><path d="M5.5 .5L10.5 9.5H.5z" fill="#f0a732"/><path d="M5.5 3.5v3" stroke="#fff" stroke-width="1.1"/><circle cx="5.5" cy="8" r=".6" fill="#fff"/></svg>
<div class="a" style="left:701px;top:152px;height:20px;line-height:20px;font-size:9px;color:#6c707e;white-space:nowrap;letter-spacing:-0.3px">222</div>
<svg class="a" style="left:720px;top:156px;" width="11" height="10" viewBox="0 0 11 10"><path d="M5.5 .5L10.5 9.5H.5z" fill="#d9d2a6"/><path d="M5.5 3.5v3" stroke="#fff" stroke-width="1.1"/><circle cx="5.5" cy="8" r=".6" fill="#fff"/></svg>
<div class="a" style="left:731px;top:152px;height:20px;line-height:20px;font-size:9px;color:#6c707e;white-space:nowrap;letter-spacing:-0.3px">46</div>
<svg class="a" style="left:746px;top:157px;" width="10" height="10" viewBox="0 0 10 10"><path d="M1 4.5l3 3 5.5-6.5" fill="none" stroke="#4d9e5a" stroke-width="1.4"/><path d="M1 9c1-1 2 1 3 0s2 1 3 0 2 1 2.5 0" fill="none" stroke="#4d9e5a" stroke-width=".8"/></svg>
<div class="a" style="left:758px;top:152px;height:20px;line-height:20px;font-size:9px;color:#6c707e;white-space:nowrap;letter-spacing:-0.3px">128</div>
<svg class="a" style="left:779px;top:159px;" width="7" height="5" viewBox="0 0 7 5"><path d="M.8 4.2L3.5 1.2 6.2 4.2" fill="none" stroke="#6c707e" stroke-width="1"/></svg>
<svg class="a" style="left:794px;top:159px;" width="7" height="5" viewBox="0 0 7 5"><path d="M.8 .8L3.5 3.8 6.2 .8" fill="none" stroke="#6c707e" stroke-width="1"/></svg>
<div class="a" style="left:771px;top:172.25px;width:36px;height:16px;background:#f0f0f2;border-radius:3px 0 0 3px"></div>
<div class="a" style="left:773px;top:170.25px;height:20px;line-height:20px;font-size:10.4px;color:#8c8c8c;white-space:nowrap;overflow:hidden;width:34px">second</div>
<div class="a" style="left:771px;top:577.25px;width:36px;height:16px;background:#f0f0f2;border-radius:3px 0 0 3px"></div>
<div class="a" style="left:773px;top:575.25px;height:20px;line-height:20px;font-size:10.4px;color:#8c8c8c;white-space:nowrap;overflow:hidden;width:34px">second</div>
<svg class="a" style="left:653px;top:214.75px;" width="9" height="9" viewBox="0 0 9 9"><circle cx="4.5" cy="2.8" r="2" fill="#a0a3aa"/><path d="M.8 8.5c0-2 1.6-3.3 3.7-3.3s3.7 1.3 3.7 3.3z" fill="#a0a3aa"/></svg>
<div class="a" style="left:666px;top:209.75px;height:20px;line-height:20px;font-size:10.8px;color:#8a8d94;white-space:nowrap;letter-spacing:-0.1px">kbrahma-ryzen</div>
<svg class="a" style="left:549px;top:619.75px;" width="9" height="9" viewBox="0 0 9 9"><circle cx="4.5" cy="2.8" r="2" fill="#a0a3aa"/><path d="M.8 8.5c0-2 1.6-3.3 3.7-3.3s3.7 1.3 3.7 3.3z" fill="#a0a3aa"/></svg>
<div class="a" style="left:562px;top:614.75px;height:20px;line-height:20px;font-size:10.8px;color:#8a8d94;white-space:nowrap;letter-spacing:-0.1px">kbrahma-t490</div>
<div class="a" style="left:634px;top:719px;width:32px;height:16px;background:#f0f0f2;border-radius:3px"></div>
<div class="a" style="left:638px;top:717px;height:20px;line-height:20px;font-size:10.2px;color:#8c8c8c;white-space:nowrap;letter-spacing:-0.2px">data:</div>
<div class="a mono " style="left:668.00px;top:718.00px;height:20px;line-height:20px">{<span class="s">'message'</span>: <span class="s">'update</span></div>
<div class="a" style="left:580px;top:820.25px;width:38px;height:16px;background:#f0f0f2;border-radius:3px"></div>
<div class="a" style="left:584px;top:818.25px;height:20px;line-height:20px;font-size:10.2px;color:#8c8c8c;white-space:nowrap;letter-spacing:-0.2px">index:</div>
<div class="a mono " style="left:620.00px;top:819.25px;height:20px;line-height:20px"><span class="n">0</span>, <span class="p">has_admin_cc</span>=<span class="k">True</span>)</div>
<div class="a" style="left:797px;top:176.8px;width:10px;height:2px;background:#ecc05a"></div>
<div class="a" style="left:797px;top:179px;width:10px;height:2px;background:#ecc05a"></div>
<div class="a" style="left:797px;top:185px;width:10px;height:2px;background:#ecc05a"></div>
<div class="a" style="left:797px;top:192px;width:10px;height:2px;background:#ecc05a"></div>
<div class="a" style="left:797px;top:201.8px;width:10px;height:2px;background:#ecc05a"></div>
<div class="a" style="left:797px;top:207px;width:10px;height:2px;background:#ecc05a"></div>
<div class="a" style="left:797px;top:213.7px;width:10px;height:2px;background:#ecc05a"></div>
<div class="a" style="left:797px;top:219.8px;width:10px;height:2px;background:#ecc05a"></div>
<div class="a" style="left:797px;top:251.8px;width:10px;height:2px;background:#ecc05a"></div>
<div class="a" style="left:797px;top:266.5px;width:10px;height:2px;background:#ecc05a"></div>
<div class="a" style="left:797px;top:287px;width:10px;height:2px;background:#ecc05a"></div>
<div class="a" style="left:797px;top:312.9px;width:10px;height:2px;background:#ecc05a"></div>
<div class="a" style="left:797px;top:315.7px;width:10px;height:2px;background:#ecc05a"></div>
<div class="a" style="left:797px;top:319px;width:10px;height:2px;background:#ecc05a"></div>
<div class="a" style="left:797px;top:322.6px;width:10px;height:2px;background:#ecc05a"></div>
<div class="a" style="left:797px;top:326.8px;width:10px;height:2px;background:#ecc05a"></div>
<div class="a" style="left:797px;top:331px;width:10px;height:2px;background:#ecc05a"></div>
<div class="a" style="left:797px;top:335.7px;width:10px;height:2px;background:#ecc05a"></div>
<div class="a" style="left:797px;top:457px;width:10px;height:2px;background:#ecc05a"></div>
<div class="a" style="left:797px;top:468.4px;width:10px;height:2px;background:#ecc05a"></div>
<div class="a" style="left:797px;top:490.7px;width:10px;height:2px;background:#ecc05a"></div>
<div class="a" style="left:797px;top:493.4px;width:10px;height:2px;background:#ecc05a"></div>
<div class="a" style="left:797px;top:496.8px;width:10px;height:2px;background:#ecc05a"></div>
<div class="a" style="left:797px;top:500.4px;width:10px;height:2px;background:#ecc05a"></div>
<div class="a" style="left:797px;top:506px;width:10px;height:2px;background:#ecc05a"></div>
<div class="a" style="left:797px;top:539px;width:10px;height:2px;background:#ecc05a"></div>
<div class="a" style="left:797px;top:543px;width:10px;height:2px;background:#ecc05a"></div>
<div class="a" style="left:797px;top:547.6px;width:10px;height:2px;background:#ecc05a"></div>
<div class="a" style="left:797px;top:551.8px;width:10px;height:2px;background:#ecc05a"></div>
<div class="a" style="left:797px;top:571px;width:10px;height:2px;background:#ecc05a"></div>
<div class="a" style="left:797px;top:576.8px;width:10px;height:2px;background:#ecc05a"></div>
<div class="a" style="left:797px;top:582px;width:10px;height:2px;background:#ecc05a"></div>
<div class="a" style="left:797px;top:588px;width:10px;height:2px;background:#ecc05a"></div>
<div class="a" style="left:797px;top:593.4px;width:10px;height:2px;background:#ecc05a"></div>
<div class="a" style="left:797px;top:600.4px;width:10px;height:2px;background:#ecc05a"></div>
<div class="a" style="left:797px;top:608.7px;width:10px;height:2px;background:#ecc05a"></div>
<div class="a" style="left:797px;top:612.9px;width:10px;height:2px;background:#ecc05a"></div>
<div class="a" style="left:797px;top:617px;width:10px;height:2px;background:#ecc05a"></div>
<div class="a" style="left:797px;top:622.6px;width:10px;height:2px;background:#ecc05a"></div>
<div class="a" style="left:797px;top:628px;width:10px;height:2px;background:#ecc05a"></div>
<div class="a" style="left:797px;top:635px;width:10px;height:2px;background:#ecc05a"></div>
<div class="a" style="left:797px;top:647.6px;width:10px;height:2px;background:#ecc05a"></div>
<div class="a" style="left:797px;top:676.8px;width:10px;height:2px;background:#ecc05a"></div>
<div class="a" style="left:797px;top:681px;width:10px;height:2px;background:#ecc05a"></div>
<div class="a" style="left:797px;top:711.5px;width:10px;height:2px;background:#ecc05a"></div>
<div class="a" style="left:797px;top:715.7px;width:10px;height:2px;background:#ecc05a"></div>
<div class="a" style="left:797px;top:737.9px;width:10px;height:2px;background:#ecc05a"></div>
<div class="a" style="left:797px;top:743.4px;width:10px;height:2px;background:#ecc05a"></div>
<div class="a" style="left:797px;top:757.5px;width:10px;height:2px;background:#ecc05a"></div>
<div class="a" style="left:797px;top:762px;width:10px;height:2px;background:#ecc05a"></div>
<div class="a" style="left:797px;top:766.8px;width:10px;height:2px;background:#ecc05a"></div>
<div class="a" style="left:797px;top:773.3px;width:10px;height:2px;background:#ecc05a"></div>
<div class="a" style="left:797px;top:777.9px;width:10px;height:2px;background:#ecc05a"></div>
<div class="a" style="left:797px;top:783.4px;width:10px;height:2px;background:#ecc05a"></div>
<div class="a" style="left:797px;top:788px;width:10px;height:2px;background:#ecc05a"></div>
<div class="a" style="left:797px;top:796.4px;width:10px;height:2px;background:#ecc05a"></div>
<div class="a" style="left:797px;top:825px;width:10px;height:2px;background:#ecc05a"></div>
<div class="a" style="left:797px;top:829.7px;width:10px;height:2px;background:#ecc05a"></div>
<div class="a" style="left:797px;top:837px;width:10px;height:2px;background:#ecc05a"></div>
<div class="a" style="left:797px;top:866.8px;width:10px;height:2px;background:#ecc05a"></div>
<div class="a" style="left:797px;top:887px;width:10px;height:2px;background:#ecc05a"></div>
<div class="a" style="left:797px;top:895.5px;width:10px;height:2px;background:#ecc05a"></div>
<div class="a" style="left:797px;top:899px;width:10px;height:2px;background:#ecc05a"></div>
<div class="a" style="left:797px;top:907.5px;width:10px;height:2px;background:#ecc05a"></div>
<div class="a" style="left:797px;top:344.4px;width:10px;height:9.6px;background:#e9bb4c"></div>
<div class="a" style="left:797px;top:391.7px;width:10px;height:18px;background:#e9bb4c"></div>
<div class="a" style="left:797px;top:686px;width:10px;height:12.6px;background:#e9bb4c"></div>
<div class="a" style="left:797px;top:851px;width:10px;height:9px;background:#e9bb4c"></div>
<div class="a" style="left:797px;top:873px;width:10px;height:7.7px;background:#e9bb4c"></div>
<div class="a" style="left:797px;top:307px;width:10px;height:1.5px;background:#a98bd6"></div>
<div class="a" style="left:797px;top:368.9px;width:10px;height:1.5px;background:#c9cbbf"></div>
<div class="a" style="left:797px;top:561px;width:10px;height:1.5px;background:#c9cbbf"></div>
<div class="a" style="left:797px;top:655.6px;width:10px;height:1.5px;background:#c9cbbf"></div>
<div class="a" style="left:807px;top:120px;width:1px;height:812px;background:#ebecf0"></div>
<div class="a" style="left:874px;top:152px;width:1px;height:780px;background:#f0f0f2"></div>
<svg class="a" style="left:866px;top:157.5px;" width="6" height="9" viewBox="0 0 6 9"><path d="M1.5 1.3 L4.6 4.5 L1.5 7.7" fill="none" stroke="#8d9099" stroke-width="0.9"/></svg>
<svg class="a" style="left:1394px;top:156px;" width="11" height="9" viewBox="0 0 11 9"><path d="M1 4.5l3 3L10 1" fill="none" stroke="#4d9e5a" stroke-width="1.4"/></svg>
<div class="a" style="left:1402px;top:171px;width:7px;height:245px;border-radius:3px;background:#dadbdd"></div>
<div class="a" style="left:1399px;top:323px;width:10px;height:1.5px;background:#a98bd6"></div>
<div class="a" style="left:1399px;top:368px;width:10px;height:1.5px;background:#a98bd6"></div>
<div class="a" style="left:1374px;top:213.25px;height:20px;line-height:20px;font-size:10.4px;color:#8a8d94;white-space:nowrap;overflow:hidden;width:28px">28 usag</div>
<svg class="a" style="left:1001px;top:238.5px;" width="9" height="9" viewBox="0 0 9 9"><circle cx="4.5" cy="2.8" r="2" fill="#a0a3aa"/><path d="M.8 8.5c0-2 1.6-3.3 3.7-3.3s3.7 1.3 3.7 3.3z" fill="#a0a3aa"/></svg>
<div class="a" style="left:1014px;top:233.5px;height:20px;line-height:20px;font-size:10.8px;color:#8a8d94;white-space:nowrap;letter-spacing:-0.1px">kbrahma-ryzen</div>
<svg class="a" style="left:1347px;top:420.75px;" width="9" height="9" viewBox="0 0 9 9"><circle cx="4.5" cy="2.8" r="2" fill="#a0a3aa"/><path d="M.8 8.5c0-2 1.6-3.3 3.7-3.3s3.7 1.3 3.7 3.3z" fill="#a0a3aa"/></svg>
<div class="a" style="left:1360px;top:415.75px;height:20px;line-height:20px;font-size:10.8px;color:#8a8d94;white-space:nowrap;letter-spacing:-0.1px">kbrahma-r</div>
<svg class="a" style="left:1001px;top:441px;" width="9" height="9" viewBox="0 0 9 9"><circle cx="4.5" cy="2.8" r="2" fill="#a0a3aa"/><path d="M.8 8.5c0-2 1.6-3.3 3.7-3.3s3.7 1.3 3.7 3.3z" fill="#a0a3aa"/></svg>
<div class="a" style="left:1014px;top:436px;height:20px;line-height:20px;font-size:10.8px;color:#8a8d94;white-space:nowrap;letter-spacing:-0.1px">kbrahma-ryzen</div>
<svg class="a" style="left:881px;top:620.75px;" width="9" height="11" viewBox="0 0 9 11"><ellipse cx="4.5" cy="4.3" rx="3.6" ry="4" fill="#f4a70a"/><rect x="3" y="8.3" width="3" height="2" fill="#7d7f8a"/></svg>
<svg class="a" style="left:847px;top:642px;" width="14" height="13" viewBox="0 0 14 13"><circle cx="5.5" cy="5.5" r="4.5" fill="none" stroke="#3574f0" stroke-width="1.2"/><circle cx="5.5" cy="5.5" r="1.8" fill="none" stroke="#3574f0" stroke-width="1"/><path d="M11.5 7v5M10 10.5l1.5 1.5 1.5-1.5" fill="none" stroke="#6c707e" stroke-width="1"/></svg>
<div class="a" style="left:1292px;top:638.5px;height:20px;line-height:20px;font-size:10.4px;color:#8a8d94;white-space:nowrap;">10 usages</div>
<svg class="a" style="left:1352px;top:643.5px;" width="9" height="9" viewBox="0 0 9 9"><circle cx="4.5" cy="2.8" r="2" fill="#a0a3aa"/><path d="M.8 8.5c0-2 1.6-3.3 3.7-3.3s3.7 1.3 3.7 3.3z" fill="#a0a3aa"/></svg>
<div class="a" style="left:1365px;top:638.5px;height:20px;line-height:20px;font-size:10.8px;color:#8a8d94;white-space:nowrap;letter-spacing:-0.1px">kbrahma</div>
<svg class="a" style="left:1001px;top:663.75px;" width="9" height="9" viewBox="0 0 9 9"><circle cx="4.5" cy="2.8" r="2" fill="#a0a3aa"/><path d="M.8 8.5c0-2 1.6-3.3 3.7-3.3s3.7 1.3 3.7 3.3z" fill="#a0a3aa"/></svg>
<div class="a" style="left:1014px;top:658.75px;height:20px;line-height:20px;font-size:10.8px;color:#8a8d94;white-space:nowrap;letter-spacing:-0.1px">kbrahma-t490</div>
<div class="a" style="left:1202px;top:780.25px;height:20px;line-height:20px;font-size:10.4px;color:#8a8d94;white-space:nowrap;">14 usages</div>
<svg class="a" style="left:1264px;top:785.25px;" width="9" height="9" viewBox="0 0 9 9"><circle cx="4.5" cy="2.8" r="2" fill="#a0a3aa"/><path d="M.8 8.5c0-2 1.6-3.3 3.7-3.3s3.7 1.3 3.7 3.3z" fill="#a0a3aa"/></svg>
<div class="a" style="left:1277px;top:780.25px;height:20px;line-height:20px;font-size:10.8px;color:#8a8d94;white-space:nowrap;letter-spacing:-0.1px">kbrahma-t490</div>
<div class="a" style="left:1284px;top:881.5px;height:20px;line-height:20px;font-size:10.4px;color:#8a8d94;white-space:nowrap;">88 usages</div>
<svg class="a" style="left:1346px;top:886.5px;" width="9" height="9" viewBox="0 0 9 9"><circle cx="4.5" cy="2.8" r="2" fill="#a0a3aa"/><path d="M.8 8.5c0-2 1.6-3.3 3.7-3.3s3.7 1.3 3.7 3.3z" fill="#a0a3aa"/></svg>
<div class="a" style="left:1359px;top:881.5px;height:20px;line-height:20px;font-size:10.8px;color:#8a8d94;white-space:nowrap;letter-spacing:-0.1px">kbrahma-r</div>
<svg class="a" style="left:1001px;top:906.75px;" width="9" height="9" viewBox="0 0 9 9"><circle cx="4.5" cy="2.8" r="2" fill="#a0a3aa"/><path d="M.8 8.5c0-2 1.6-3.3 3.7-3.3s3.7 1.3 3.7 3.3z" fill="#a0a3aa"/></svg>
<div class="a" style="left:1014px;top:901.75px;height:20px;line-height:20px;font-size:10.8px;color:#8a8d94;white-space:nowrap;letter-spacing:-0.1px">kbrahma-ryzen</div>
<svg class="a" style="left:1417px;top:128px;" width="15" height="15" viewBox="0 0 15 15"><path d="M7.5 1.5c-2.7 0-4.3 2-4.3 4.5v3.3L1.8 11.5h11.4L11.8 9.3V6c0-2.5-1.6-4.5-4.3-4.5zM6 13a1.5 1.5 0 003 0" fill="none" stroke="#6c707e" stroke-width="1.1" stroke-linejoin="round"/></svg>
<svg class="a" style="left:1418px;top:159px;" width="14" height="13" viewBox="0 0 14 13"><path d="M7 11.5c-3 0-5.5-2-5.5-5S4 1.5 7 1.5s5.2 1.8 5.2 4.4S10 9.5 7.5 9.5 4 8 4 6.2 5.5 3.8 7.2 3.8 9.7 5 9.7 6.3 8.6 7.6 7.3 7.6" fill="none" stroke="#6c707e" stroke-width="1.1"/></svg>
<svg class="a" style="left:1419px;top:188px;" width="12" height="15" viewBox="0 0 12 15"><ellipse cx="6" cy="3" rx="5" ry="2" fill="none" stroke="#6c707e" stroke-width="1.1"/><path d="M1 3v9c0 1.1 2.2 2 5 2s5-.9 5-2V3M1 6c0 1.1 2.2 2 5 2s5-.9 5-2M1 9c0 1.1 2.2 2 5 2s5-.9 5-2" fill="none" stroke="#6c707e" stroke-width="1.1"/></svg>
<svg class="a" style="left:1417px;top:218px;" width="16" height="14" viewBox="0 0 16 14"><path d="M3 6c-1.5-3 0-5 2.5-5 1 0 2 .8 2.5 1.5C8.5 1.8 9.5 1 10.5 1 13 1 14.5 3 13 6M2 7.5c0-1 1-1.5 6-1.5s6 .5 6 1.5V11c0 1.5-2.5 2.5-6 2.5S2 12.5 2 11z" fill="none" stroke="#6c707e" stroke-width="1.2"/><path d="M6 9v2M10 9v2" stroke="#6c707e" stroke-width="1.3"/></svg>
<svg class="a" style="left:1417px;top:248px;" width="16" height="15" viewBox="0 0 16 15"><path d="M3 6c-1.5-3 0-5 2.5-5 1 0 2 .8 2.5 1.5C8.5 1.8 9.5 1 10.5 1 13 1 14.5 3 13 6M2 7.5c0-1 1-1.5 6-1.5" fill="none" stroke="#6c707e" stroke-width="1.2"/><path d="M2 7.5V11c0 1.5 2 2.5 5 2.5" fill="none" stroke="#6c707e" stroke-width="1.2"/><rect x="8" y="8" width="7.5" height="6" rx="1" fill="#6c707e"/></svg>
<svg class="a" style="left:1059px;top:611px;" width="8" height="15" viewBox="0 0 8 15"><path d="M1 1.5c1.2 0 2.2.2 3 .8.8-.6 1.8-.8 3-.8M4 2.3v10.4M1 13.5c1.2 0 2.2-.2 3-.8.8.6 1.8.8 3 .8" fill="none" stroke="#222" stroke-width="1.1"/></svg>
<div class="a" style="left:10px;top:939.5px;width:7px;height:8px;border:1.2px solid #5b8def;border-radius:2px"></div>
<div class="a" style="left:19.5px;top:934px;height:20px;line-height:20px;font-size:9.1px;color:#5d6068;white-space:nowrap;">forum.pc5bai.com</div>
<svg class="a" style="left:99px;top:939.5px;" width="6" height="9" viewBox="0 0 6 9"><path d="M1.5 1.3 L4.6 4.5 L1.5 7.7" fill="none" stroke="#7d8089" stroke-width="0.9"/></svg>
<div class="a" style="left:109.5px;top:934px;height:20px;line-height:20px;font-size:9.1px;color:#5d6068;white-space:nowrap;">lesson</div>
<svg class="a" style="left:142px;top:939.5px;" width="6" height="9" viewBox="0 0 6 9"><path d="M1.5 1.3 L4.6 4.5 L1.5 7.7" fill="none" stroke="#7d8089" stroke-width="0.9"/></svg>
<div class="a" style="left:152.5px;top:934px;height:20px;line-height:20px;font-size:9.1px;color:#5d6068;white-space:nowrap;">tests</div>
<svg class="a" style="left:178px;top:939.5px;" width="6" height="9" viewBox="0 0 6 9"><path d="M1.5 1.3 L4.6 4.5 L1.5 7.7" fill="none" stroke="#7d8089" stroke-width="0.9"/></svg>
<svg class="a" style="left:189px;top:938.5px;" width="11" height="11" viewBox="0 0 12 13"><path d="M5.5 0.5c-2.5 0-3 1-3 2v1.5h3v0.6H1.6C0.6 4.6 0 5.6 0 7.2s0.6 2.7 1.6 2.7h1V8.3c0-1.1 0.9-2 2-2h3c0.9 0 1.6-0.7 1.6-1.6V2.5c0-1-1-2-3.7-2z" fill="#3f7fd0"/><path d="M6.5 12.5c2.5 0 3-1 3-2V9h-3v-0.6h3.9c1 0 1.6-1 1.6-2.6s-0.6-2.7-1.6-2.7h-1v1.6c0 1.1-0.9 2-2 2h-3c-0.9 0-1.6 0.7-1.6 1.6v2.2c0 1 1 2 3.7 2z" fill="#f6b92a"/></svg>
<div class="a" style="left:203px;top:934px;height:20px;line-height:20px;font-size:9.1px;color:#5d6068;white-space:nowrap;">factory.py</div>
<div class="a" style="left:1104.5px;top:934px;height:20px;line-height:20px;font-size:9.1px;color:#5d6068;white-space:nowrap;">26:15</div>
<div class="a" style="left:1137px;top:934px;height:20px;line-height:20px;font-size:9.1px;color:#5d6068;white-space:nowrap;">CRLF</div>
<div class="a" style="left:1168.5px;top:934px;height:20px;line-height:20px;font-size:9.1px;color:#5d6068;white-space:nowrap;">UTF-8</div>
<svg class="a" style="left:1203px;top:938px;" width="13" height="12" viewBox="0 0 13 12"><path d="M2.5 5c-1.2-2.5 0-4 2-4 .8 0 1.6.6 2 1.2C6.9 1.6 7.7 1 8.5 1c2 0 3.2 1.5 2 4M1.6 6.2c0-.8.8-1.2 4.9-1.2s4.9.4 4.9 1.2V9c0 1.2-2 2-4.9 2S1.6 10.2 1.6 9z" fill="none" stroke="#5d6068" stroke-width="1.1"/><path d="M5 7.5v1.5M8 7.5v1.5" stroke="#5d6068" stroke-width="1.1"/></svg>
<div class="a" style="left:1230.5px;top:934px;height:20px;line-height:20px;font-size:9.1px;color:#5d6068;white-space:nowrap;">4 spaces</div>
<div class="a" style="left:1275.5px;top:934px;height:20px;line-height:20px;font-size:9.1px;color:#5d6068;white-space:nowrap;letter-spacing:-0.12px">Python 3.12 (forum.pc5bai.com)</div>
<svg class="a" style="left:1415px;top:937px;" width="13" height="13" viewBox="0 0 13 13"><rect x="1" y="6" width="7" height="6" rx="1" fill="none" stroke="#5d6068" stroke-width="1.1"/><path d="M6 6V3.5a2.5 2.5 0 015 0V5" fill="none" stroke="#5d6068" stroke-width="1.1"/></svg>
<div class="a" style="left:31px;top:925px;width:144px;height:7px;border-radius:3px;background:#d6d7da"></div>
<svg class="a" style="left:14px;top:962px;" width="20" height="20" viewBox="0 0 20 20"><circle cx="8.5" cy="10" r="7" fill="#f08a24"/><path d="M6 12.5a3 3 0 013-3 3.8 3.8 0 017 1.2 2.4 2.4 0 01.2 4.8H7.5A2.5 2.5 0 016 12.5z" fill="#dfe6f2" stroke="#b8c4d8" stroke-width=".6"/></svg>
<div class="a" style="left:38px;top:956px;height:20px;line-height:20px;font-size:8.5px;color:#1a1a1a;white-space:nowrap;font-weight:bold">15°C</div>
<div class="a" style="left:38px;top:967.5px;height:20px;line-height:20px;font-size:8.4px;color:#3a3a3a;white-space:nowrap;">晴れのちくもり</div>
<div class="a" style="left:528.5px;top:963.5px;width:17.5px;height:17.5px;background:linear-gradient(135deg,#2fa6f0,#1370d6)"></div>
<div class="a" style="left:536.6px;top:963.5px;width:1.3px;height:17.5px;background:#e6eaf0"></div>
<div class="a" style="left:528.5px;top:971.6px;width:17.5px;height:1.3px;background:#e6eaf0"></div>
<div class="a" style="left:557px;top:961px;width:162px;height:22px;border-radius:11px;background:#f4f5f8;border:1px solid #dcdfe5"></div>
<svg class="a" style="left:564px;top:966px;" width="12" height="12" viewBox="0 0 12 12"><circle cx="5" cy="5" r="4" fill="none" stroke="#222" stroke-width="1.3"/><path d="M8 8l3.2 3.2" stroke="#222" stroke-width="1.4"/></svg>
<div class="a" style="left:583px;top:962px;height:20px;line-height:20px;font-size:9.5px;color:#5d5d5d;white-space:nowrap;">検索</div>
<svg class="a" style="left:683px;top:961px;" width="34" height="20" viewBox="0 0 34 20"><path d="M2 10a6 6 0 0112 0v1H2z" fill="#f2c53c"/><rect x="1" y="10" width="14" height="2" fill="#e7b22a"/><path d="M17 2v6a4 4 0 008 0V2" fill="none" stroke="#6c43b8" stroke-width="1.6"/><path d="M21 12v4" stroke="#6c43b8" stroke-width="1.6"/><ellipse cx="28" cy="13" rx="5.5" ry="3.3" fill="#5a3a22" transform="rotate(20 28 13)"/><circle cx="7" cy="15" r="1.5" fill="#3a6ad8"/></svg>
<div class="a" style="left:735px;top:964px;width:12px;height:12px;background:#ebecee;border:1px solid #cfd1d6"></div>
<div class="a" style="left:730px;top:969px;width:12px;height:12px;background:#1d1d1f"></div>
<div class="a" style="left:734px;top:969px;width:8px;height:8px;background:#8a8b8f"></div>
<svg class="a" style="left:763px;top:963px;" width="20" height="20" viewBox="0 0 20 20"><circle cx="10" cy="10" r="9.5" fill="#db4437"/><path d="M10 10L1.8 14.8A9.5 9.5 0 0010 19.5z" fill="#0f9d58"/><path d="M1.8 14.8A9.5 9.5 0 0010 19.5L18.2 5.2 10 10z" fill="#0f9d58"/><path d="M10 10h9.2A9.5 9.5 0 0110 19.5L14 12z" fill="#f4c20d"/><circle cx="10" cy="10" r="4.3" fill="#fff"/><circle cx="10" cy="10" r="3.4" fill="#4285f4"/></svg>
<div class="a" style="left:778px;top:959px;width:11px;height:11px;border-radius:50%;background:#5aa9e6;border:1px solid #fff"></div>
<div class="a" style="left:771px;top:985px;width:4px;height:1.5px;background:#777"></div>
<div class="a" style="left:791px;top:958px;width:26px;height:28px;border-radius:4px;background:#f4f5f8;border:1px solid #e2e4e9"></div>
<div class="a" style="left:796px;top:963px;width:17px;height:17px;background:linear-gradient(135deg,#21d789,#fcf84a 60%,#07c3f2)"></div>
<div class="a" style="left:798px;top:965px;width:13px;height:13px;background:#000"></div>
<div class="a" style="left:799.5px;top:966px;font:bold 5.5px/6px 'Liberation Sans',sans-serif;color:#fff">PC</div>
<div class="a" style="left:800px;top:975px;width:4px;height:1px;background:#fff"></div>
<div class="a" style="left:799px;top:983.5px;width:10px;height:2px;border-radius:1px;background:#1f6fd6"></div>
<svg class="a" style="left:829px;top:963px;" width="20" height="20" viewBox="0 0 20 20"><circle cx="10" cy="10" r="9.5" fill="#db4437"/><path d="M10 10L1.8 14.8A9.5 9.5 0 0010 19.5z" fill="#0f9d58"/><path d="M1.8 14.8A9.5 9.5 0 0010 19.5L18.2 5.2 10 10z" fill="#0f9d58"/><path d="M10 10h9.2A9.5 9.5 0 0110 19.5L14 12z" fill="#f4c20d"/><circle cx="10" cy="10" r="4.3" fill="#fff"/><circle cx="10" cy="10" r="3.4" fill="#4285f4"/></svg>
<div class="a" style="left:842px;top:958px;width:10px;height:10px;border-radius:50%;background:#e8772e;color:#fff;font:bold 6px/10px 'Liberation Sans',sans-serif;text-align:center">k</div>
<div class="a" style="left:837px;top:985px;width:4px;height:1.5px;background:#777"></div>
<div class="a" style="left:862px;top:965px;width:18px;height:14px;border-radius:1px;background:#f7c23f"></div>
<div class="a" style="left:862px;top:964px;width:8px;height:3px;border-radius:1px;background:#e0a82a"></div>
<div class="a" style="left:865px;top:973px;width:12px;height:4px;background:#2673c9"></div>
<div class="a" style="left:868px;top:985px;width:4px;height:1.5px;background:#777"></div>
<div class="a" style="left:896px;top:964px;width:14px;height:17px;border-radius:2px;background:#fff;border:1px solid #9aa0aa"></div>
<svg class="a" style="left:897px;top:966px;" width="12" height="14" viewBox="0 0 12 14"><path d="M2 5h7M2 8h7M2 11h5" stroke="#8a93a3" stroke-width=".9"/><path d="M7 10l4-8 1 .6-4 8z" fill="#c77b3c"/></svg>
<div class="a" style="left:901px;top:985px;width:4px;height:1.5px;background:#777"></div>
<svg class="a" style="left:1150px;top:968px;" width="9" height="6" viewBox="0 0 9 6"><path d="M1 5L4.5 1.5 8 5" fill="none" stroke="#2b2b2b" stroke-width="1.1"/></svg>
<svg class="a" style="left:1172px;top:964px;" width="11" height="14" viewBox="0 0 11 14"><rect x="1" y="4" width="9" height="9" fill="#d8382e"/><rect x="4.2" y="4" width="2.6" height="9" fill="#fff"/><rect x="0" y="3" width="11" height="2.5" fill="#c22f27"/><circle cx="3.5" cy="2" r="1.8" fill="none" stroke="#333" stroke-width="1"/><circle cx="7.5" cy="2" r="1.8" fill="none" stroke="#333" stroke-width="1"/></svg>
<svg class="a" style="left:1196px;top:965px;" width="15" height="13" viewBox="0 0 15 13"><path d="M3.5 11a3 3 0 01-.5-6 4.5 4.5 0 018.7 1A2.5 2.5 0 0111.5 11z" fill="none" stroke="#2b2b2b" stroke-width="1.2"/><path d="M1 1l13 11" stroke="#2b2b2b" stroke-width="1.2"/></svg>
<svg class="a" style="left:1222px;top:964px;" width="9" height="15" viewBox="0 0 9 15"><rect x="2" y="1" width="5" height="9" rx="2.5" fill="#2a6ad4"/><path d="M.8 7a3.7 3.7 0 007.4 0M4.5 11v3" fill="none" stroke="#2a6ad4" stroke-width="1.1"/></svg>
<div class="a" style="left:1246px;top:962px;height:20px;line-height:20px;font-size:9px;color:#b5b5b5;white-space:nowrap;">A</div>
<div class="a" style="left:1272px;top:966px;width:11px;height:11px;border-radius:50%;background:radial-gradient(circle at 35% 35%,#4fa3f0,#1a5fc8)"></div>
<div class="a" style="left:1279px;top:973px;width:5px;height:5px;border-radius:50%;background:#e84a3d"></div>
<svg class="a" style="left:1300px;top:965px;" width="14" height="11" viewBox="0 0 14 11"><path d="M1 4a9 9 0 0112 0M3 6.3a6 6 0 018 0M5 8.5a3 3 0 014 0" fill="none" stroke="#2b2b2b" stroke-width="1.2"/><circle cx="7" cy="10" r="1" fill="#2b2b2b"/></svg>
<svg class="a" style="left:1318px;top:965px;" width="12" height="12" viewBox="0 0 12 12"><path d="M1 4h2.5L7 1v10L3.5 8H1z" fill="none" stroke="#2b2b2b" stroke-width="1.1"/><path d="M9 3.5a3.5 3.5 0 010 5M10.5 2a5.5 5.5 0 010 8" fill="none" stroke="#2b2b2b" stroke-width="1"/></svg>
<svg class="a" style="left:1336px;top:964px;" width="14" height="14" viewBox="0 0 14 14"><rect x="1" y="2" width="10" height="6" rx="1" fill="none" stroke="#2b2b2b" stroke-width="1.1"/><path d="M4 10h9v3" fill="none" stroke="#2b2b2b" stroke-width="1.1"/><path d="M9 6l3 4" stroke="#2b2b2b" stroke-width="1.1"/></svg>
<div class="a" style="left:1387px;top:956.5px;height:20px;line-height:20px;font-size:8.8px;color:#1a1a1a;white-space:nowrap;">14:00</div>
<div class="a" style="left:1362px;top:968.5px;height:20px;line-height:20px;font-size:8.9px;color:#1a1a1a;white-space:nowrap;">2024/11/23</div>
<svg class="a" style="left:1413px;top:965px;" width="13" height="14" viewBox="0 0 13 14"><path d="M6.5 1C4 1 2.5 3 2.5 5.5V9L1 11h11l-1.5-2V5.5C10.5 3 9 1 6.5 1z" fill="#1b4fb0"/><path d="M5 12a1.5 1.5 0 003 0" fill="#1b4fb0"/></svg>
<div class="a" style="left:568px;top:910.5px;width:303px;height:37px;background:#fff;border-radius:2px;box-shadow:0 1px 3px rgba(0,0,0,.25)"></div>
<div class="a" style="left:576px;top:925px;width:1px;height:8px;background:#c5c5c5"></div><div class="a" style="left:579px;top:925px;width:1px;height:8px;background:#c5c5c5"></div>
<div class="a" style="left:588px;top:920px;height:20px;line-height:20px;font-size:8.6px;color:#3c4043;white-space:nowrap;letter-spacing:-0.2px">meet.google.com が画面を共有しています。</div>
<div class="a" style="left:758px;top:915.5px;width:71px;height:27.5px;border-radius:14px;background:#0b57d0;color:#fff;font:bold 9.5px/27.5px 'Liberation Sans',sans-serif;text-align:center">共有を停止</div>
<div class="a" style="left:837px;top:920px;height:20px;line-height:20px;font-size:9px;color:#1a5fd0;white-space:nowrap;"><u>非表示</u></div>
<svg class="a" style="left:1622px;top:481px;" width="118" height="118" viewBox="0 0 118 118"><circle cx="59.5" cy="59" r="59.2" fill="#3399cc"/>
<path d="M59.2 27.7 L26.7 83.7 L92.3 83.7 Z" fill="#fff"/>
<path d="M62.8 27.7 L94.7 56.6 L94.7 83.1 Z" fill="#fff"/>
<path d="M8.6 27.2 L59.5 27.2 L58 30.2 L8 30.2Z" fill="#fff"/>
<g stroke="#fff" stroke-width="2.3" fill="none">
<path d="M7.4 31.8 L54.4 37"/><path d="M5 36 L49.6 46"/><path d="M3.8 40.2 L44.8 54.4"/><path d="M2 45 L40 62.8"/><path d="M1.4 51 L33.9 72.4"/><path d="M2.6 57 L27.9 82"/>
</g>
<circle cx="18.3" cy="98.7" r="4.8" fill="#fff"/></svg>
<div class="a" style="left:1455px;top:646px;height:24px;line-height:24px;font-size:16.5px;color:#e8e8e8;white-space:nowrap;letter-spacing:-0.8px">小川慶一</div>
</body></html>
